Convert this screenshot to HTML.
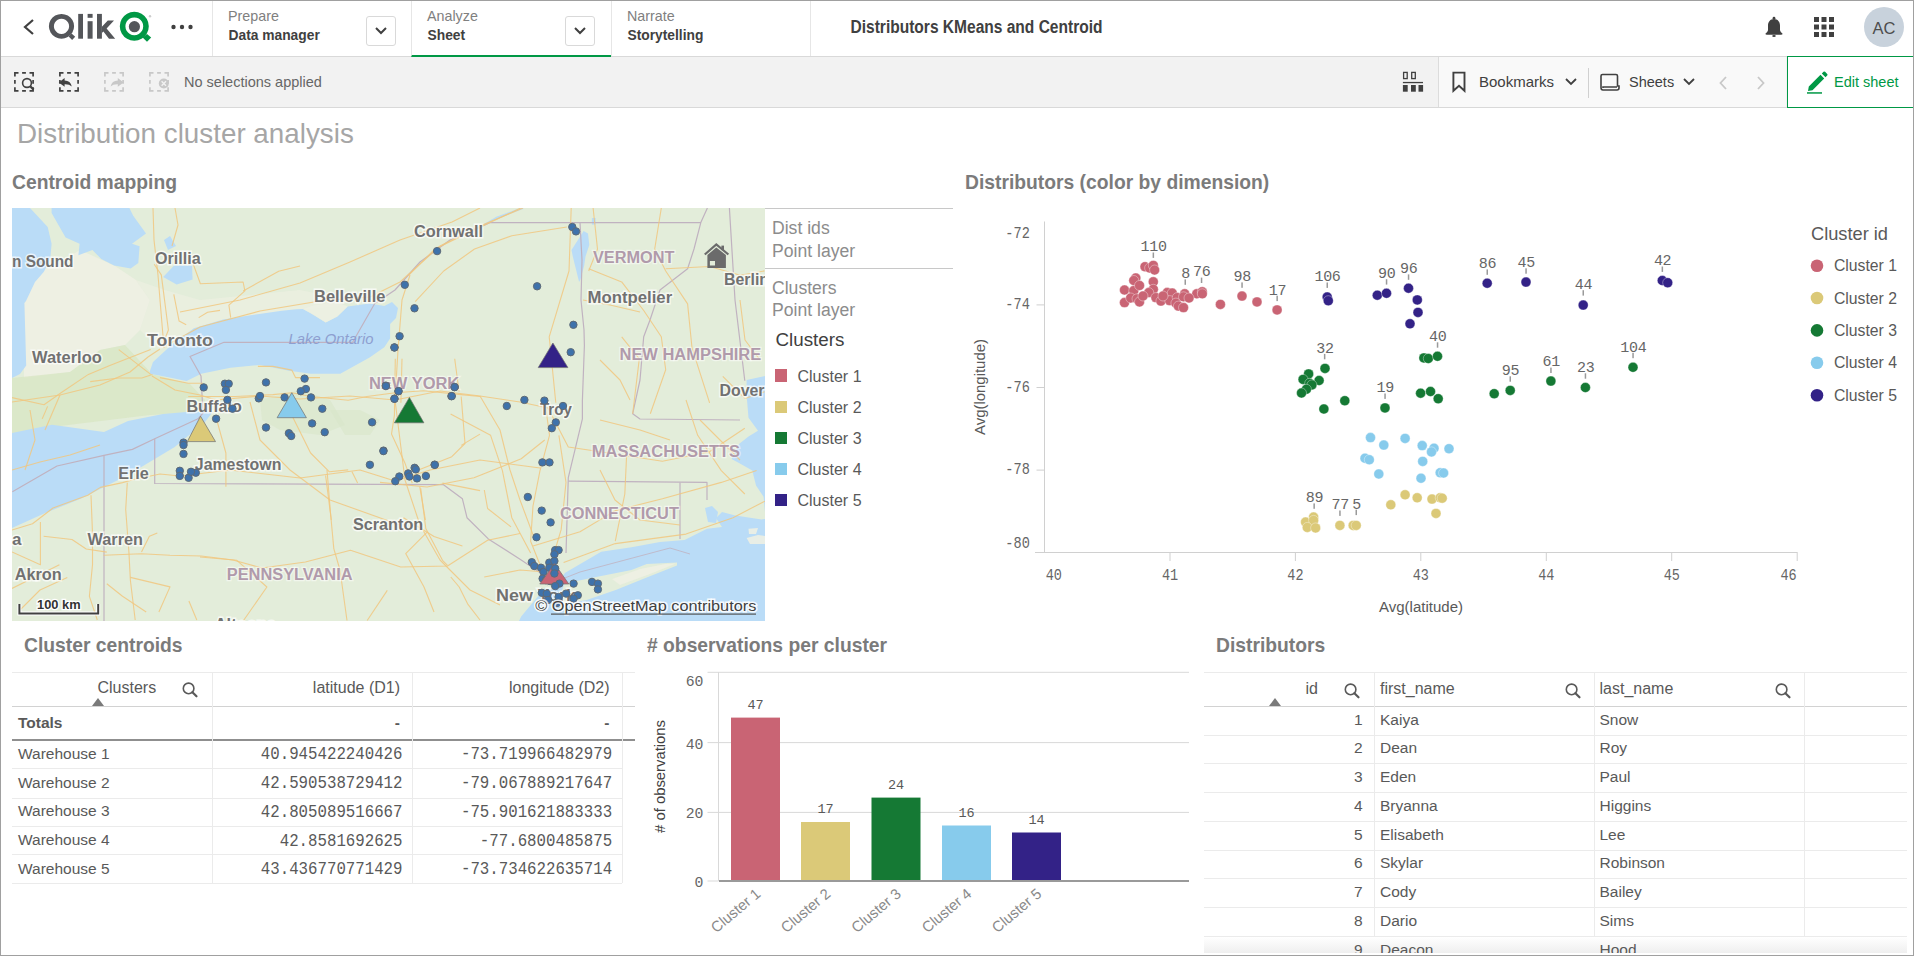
<!DOCTYPE html>
<html><head><meta charset="utf-8">
<style>
*{margin:0;padding:0;box-sizing:border-box}
html,body{width:1914px;height:956px;overflow:hidden;background:#fff;font-family:"Liberation Sans",sans-serif;color:#595959}
.a{position:absolute}
#frame{position:absolute;left:0;top:0;width:1914px;height:956px;border:1px solid #a0a0a0;pointer-events:none;z-index:50}
.hdr{position:absolute;left:0;top:0;width:1914px;height:57px;background:#fff;border-bottom:1px solid #d9d9d9}
.tab{position:absolute;top:0;height:56px;border-left:1px solid #e6e6e6}
.tab .l1{position:absolute;left:15px;top:7.5px;font-size:14.3px;color:#808080}
.tab .l2{position:absolute;left:15.5px;top:27.5px;font-size:13.8px;font-weight:bold;color:#404040}
.dd{position:absolute;top:16px;width:30px;height:30px;border:1px solid #d9d9d9;border-radius:3px}
.tbar{position:absolute;left:0;top:57px;width:1914px;height:51px;background:#f2f2f2;border-bottom:1px solid #d9d9d9}
.ttl{position:absolute;font-size:19.3px;font-weight:bold;color:#7b7b7b;white-space:nowrap;line-height:22px}
.mono{font-family:"Liberation Mono",monospace}
</style></head><body>
<div id="frame"></div>

<!-- HEADER -->
<div class="hdr">
  <svg class="a" style="left:0;top:0" width="212" height="56">
    <path d="M33 20 L25 27 L33 34" fill="none" stroke="#404040" stroke-width="2.2"/>
    <path fill-rule="evenodd" fill="#54565a" d="M61.5 13.9 A12.6 12.4 0 1 1 61.49 13.9Z M61.5 18.7 A7.6 7.6 0 1 0 61.51 18.7Z"/>
    <path fill="#54565a" d="M68.6 36.4 L72.1 40 L75.2 36.8 L71.6 33.5Z"/>
    <rect x="78.2" y="13.9" width="4.8" height="24.8" fill="#54565a"/>
    <rect x="87.6" y="13.9" width="5" height="3.9" fill="#54565a"/>
    <rect x="87.6" y="21.2" width="5" height="17.5" fill="#54565a"/>
    <rect x="97" y="13.9" width="4.9" height="24.8" fill="#54565a"/>
    <path fill="#54565a" d="M101.9 26.8 L107.8 20.6 L114 20.6 L106.6 28.4 L115.2 38.7 L109 38.7 L103.4 31.4 L101.9 33Z"/>
    <path fill-rule="evenodd" fill="#009845" d="M134.3 11.8 A14.5 14.5 0 1 1 134.29 11.8Z M134.3 17.4 A8.9 8.9 0 1 0 134.31 17.4Z"/>
    <circle cx="134.4" cy="26.7" r="5.6" fill="#54565a"/>
    <path fill="#009845" d="M142.6 37.6 L147 41.7 L151.2 37.5 L147 33.9Z"/>
    <circle cx="150" cy="16.2" r="1.2" fill="#ccc"/>
    <circle cx="173.5" cy="27" r="2.2" fill="#404040"/><circle cx="182" cy="27" r="2.2" fill="#404040"/><circle cx="190.5" cy="27" r="2.2" fill="#404040"/>
  </svg>
  <div class="tab" style="left:212px;width:199px"><div class="l1">Prepare</div><div class="l2">Data manager</div>
    <div class="dd" style="left:153px"><svg width="28" height="28"><path d="M9 11 L14 16 L19 11" fill="none" stroke="#404040" stroke-width="2"/></svg></div></div>
  <div class="tab" style="left:411px;width:200px;border-bottom:2px solid #009845;height:57px"><div class="l1">Analyze</div><div class="l2">Sheet</div>
    <div class="dd" style="left:153px"><svg width="28" height="28"><path d="M9 11 L14 16 L19 11" fill="none" stroke="#404040" stroke-width="2"/></svg></div></div>
  <div class="tab" style="left:611px;width:200px;border-right:1px solid #e6e6e6"><div class="l1">Narrate</div><div class="l2">Storytelling</div></div>
  <svg class="a" style="left:845px;top:10px" width="300" height="30"><text x="5.5" y="22.8" font-family="Liberation Sans" font-weight="bold" font-size="17.5" fill="#404040" textLength="252" lengthAdjust="spacingAndGlyphs">Distributors KMeans and Centroid</text></svg>
  <!-- bell -->
  <svg class="a" style="left:1762px;top:15px" width="24" height="24"><circle cx="12" cy="3.2" r="1.4" fill="#404040"/><path d="M12 4 C8.2 4 6 6.8 6 10.8 L6 15.2 Q5.6 17.2 3.6 18.4 Q3 19.8 5 19.8 L19 19.8 Q21 19.8 20.4 18.4 Q18.4 17.2 18 15.2 L18 10.8 C18 6.8 15.8 4 12 4Z" fill="#404040"/><ellipse cx="12" cy="20.9" rx="1.8" ry="1" fill="#404040"/></svg>
  <!-- grid -->
  <svg class="a" style="left:1813px;top:16px" width="22" height="22">
    <g fill="#404040"><rect x="1" y="1" width="5" height="5"/><rect x="8.5" y="1" width="5" height="5"/><rect x="16" y="1" width="5" height="5"/>
    <rect x="1" y="8.5" width="5" height="5"/><rect x="8.5" y="8.5" width="5" height="5"/><rect x="16" y="8.5" width="5" height="5"/>
    <rect x="1" y="16" width="5" height="5"/><rect x="8.5" y="16" width="5" height="5"/><rect x="16" y="16" width="5" height="5"/></g></svg>
  <div class="a" style="left:1864px;top:7px;width:40px;height:40px;border-radius:50%;background:#c8d2dc;color:#4d4d4d;font-size:16.5px;text-align:center;line-height:42px">AC</div>
</div>

<!-- TOOLBAR -->
<div class="tbar">
  <svg class="a" style="left:0;top:0" width="340" height="50">
<path d="M14.9 19.5 L14.9 15.9 L18.5 15.9 M29.5 15.9 L33.1 15.9 L33.1 19.5 M33.1 30.199999999999996 L33.1 33.8 L29.5 33.8 M18.5 33.8 L14.9 33.8 L14.9 30.199999999999996 M22.1 15.9 L25.9 15.9 M22.1 33.8 L25.9 33.8 M14.9 22.95 L14.9 26.749999999999996 M33.1 22.95 L33.1 26.749999999999996" fill="none" stroke="#404040" stroke-width="1.7"/><path d="M59.9 19.5 L59.9 15.9 L63.5 15.9 M74.5 15.9 L78.1 15.9 L78.1 19.5 M78.1 30.199999999999996 L78.1 33.8 L74.5 33.8 M63.5 33.8 L59.9 33.8 L59.9 30.199999999999996 M67.1 15.9 L70.9 15.9 M67.1 33.8 L70.9 33.8 M59.9 22.95 L59.9 26.749999999999996 M78.1 22.95 L78.1 26.749999999999996" fill="none" stroke="#404040" stroke-width="1.7"/><path d="M104.9 19.5 L104.9 15.9 L108.5 15.9 M119.5 15.9 L123.1 15.9 L123.1 19.5 M123.1 30.199999999999996 L123.1 33.8 L119.5 33.8 M108.5 33.8 L104.9 33.8 L104.9 30.199999999999996 M112.1 15.9 L115.9 15.9 M112.1 33.8 L115.9 33.8 M104.9 22.95 L104.9 26.749999999999996 M123.1 22.95 L123.1 26.749999999999996" fill="none" stroke="#c8c8c8" stroke-width="1.7"/><path d="M149.9 19.5 L149.9 15.9 L153.5 15.9 M164.5 15.9 L168.1 15.9 L168.1 19.5 M168.1 30.199999999999996 L168.1 33.8 L164.5 33.8 M153.5 33.8 L149.9 33.8 L149.9 30.199999999999996 M157.1 15.9 L160.9 15.9 M157.1 33.8 L160.9 33.8 M149.9 22.95 L149.9 26.749999999999996 M168.1 22.95 L168.1 26.749999999999996" fill="none" stroke="#c8c8c8" stroke-width="1.7"/>
    <circle cx="27" cy="26" r="4.4" fill="none" stroke="#404040" stroke-width="1.6"/><path d="M30.2 29.2 L33.6 32.6" stroke="#404040" stroke-width="2.2"/>
    <path d="M58.8 25.4 L64.6 21 L64.6 23.6 Q70.6 23.8 71.8 29.6 Q69.4 27 64.6 27.2 L64.6 29.8Z" fill="#404040"/>
    <path d="M123.6 25.4 L117.8 21 L117.8 23.6 Q111.8 23.8 110.6 29.6 Q113 27 117.8 27.2 L117.8 29.8Z" fill="#c8c8c8"/>
    <circle cx="163.8" cy="26.5" r="5" fill="#c8c8c8"/><path d="M161.6 24.3 L166 28.7 M166 24.3 L161.6 28.7" stroke="#f2f2f2" stroke-width="1.4"/>
    <text x="184" y="30" font-size="14.5" fill="#666" font-family="Liberation Sans">No selections applied</text>
  </svg>
  <div class="a" style="left:1438px;top:0;width:348px;height:50px;background:#f9f9f9;border-left:1px solid #dcdcdc"></div>
  <svg class="a" style="left:1400px;top:0" width="514" height="50">
    <g fill="#404040"><rect x="3.6" y="15.4" width="3.6" height="6.2" fill="none" stroke="#404040" stroke-width="1.3"/><rect x="11.7" y="15.4" width="3.6" height="6.2" fill="none" stroke="#404040" stroke-width="1.3"/><rect x="2.9" y="24.9" width="20.1" height="1.3"/><rect x="2.9" y="28" width="4.8" height="6.7"/><rect x="11" y="28" width="4.8" height="6.7"/><rect x="18.5" y="28" width="4.6" height="6.7"/></g>
    <path d="M53.4 15.6 L64.5 15.6 L64.5 33.8 L59 28.8 L53.4 33.8Z" fill="none" stroke="#404040" stroke-width="1.9"/>
    <text x="79" y="30" font-size="15" fill="#404040" font-family="Liberation Sans">Bookmarks</text>
    <path d="M166 22 L171 27 L176 22" fill="none" stroke="#404040" stroke-width="1.8"/>
    <rect x="188" y="11" width="1" height="30" fill="#d0d0d0"/>
    <path d="M201 30.5 L201 19 Q201 17.5 202.5 17.5 L216 17.5 Q217.5 17.5 217.5 19 L217.5 29 L219 29 L219 31 Q219 33 217 33 L203 33 Q201 33 201 30.5Z M203 31 L203 30 L217 30" fill="none" stroke="#404040" stroke-width="1.6"/>
    <text x="229" y="30" font-size="14.5" fill="#404040" font-family="Liberation Sans">Sheets</text>
    <path d="M284 22 L289 27 L294 22" fill="none" stroke="#404040" stroke-width="1.8"/>
    <path d="M326 20 L320.5 26 L326 32" fill="none" stroke="#c8c8c8" stroke-width="1.8"/>
    <path d="M358 20 L363.5 26 L358 32" fill="none" stroke="#c8c8c8" stroke-width="1.8"/>
  </svg>
  <div class="a" style="left:1787px;top:-1px;width:127px;height:52px;background:#fff;border:1px solid #009845;border-right:none"></div>
  <svg class="a" style="left:1800px;top:0" width="114" height="50">
    <path d="M8 34 L8.8 29.5 L20.5 17.8 L24.2 21.5 L12.5 33.2Z M21.8 16.5 L23.5 14.8 Q24.3 14 25.1 14.8 L27.2 16.9 Q28 17.7 27.2 18.5 L25.5 20.2Z" fill="#009845"/>
    <rect x="7" y="35.2" width="15" height="1.5" fill="#009845"/>
    <text x="34" y="30" font-size="14.5" fill="#009845" font-family="Liberation Sans">Edit sheet</text>
  </svg>
</div>


<div class="a" style="left:17px;top:118px;font-size:27.8px;line-height:32px;color:#a6a6a6;white-space:nowrap">Distribution cluster analysis</div>
<div class="ttl" style="left:12px;top:171.5px">Centroid mapping</div>
<div class="ttl" style="left:965px;top:171.5px">Distributors (color by dimension)</div>
<div class="ttl" style="left:24px;top:634.5px">Cluster centroids</div>
<div class="ttl" style="left:647px;top:634.5px"># observations per cluster</div>
<div class="ttl" style="left:1216px;top:634.5px">Distributors</div>


<svg class="a" style="left:12px;top:208px" width="753" height="413" viewBox="0 0 753 413">
<rect width="753" height="413" fill="#e3edda"/>
<polygon points="12.0,60.0 48.0,54.0 68.0,42.0 103.0,58.0 124.0,72.0 138.0,92.0 128.0,122.0 113.0,137.0 88.0,142.0 58.0,164.0 12.0,170.0" fill="#eef0e3" />
<polygon points="124.0,72.0 153.0,82.0 188.0,92.0 228.0,88.0 288.0,82.0 338.0,92.0 328.0,98.0 268.0,104.0 218.0,110.0 178.0,124.0 148.0,142.0 128.0,122.0 138.0,92.0" fill="#eef0e3" opacity="0.6"/>
<polygon points="0.0,170.0 58.0,164.0 88.0,142.0 113.0,137.0 140.0,166.0 178.0,176.0 193.0,192.0 193.0,204.0 138.0,207.0 48.0,218.0 0.0,226.0" fill="#d8e6c3" opacity="0.75"/>
<polygon points="248.0,192.0 288.0,182.0 318.0,192.0 333.0,217.0 308.0,227.0 268.0,222.0 250.0,212.0" fill="#d9e6c9" opacity="0.6"/>
<polygon points="318.0,202.0 348.0,202.0 368.0,212.0 358.0,227.0 333.0,227.0" fill="#d9e6c9" opacity="0.6"/>
<polygon points="0.0,0.0 18.0,0.0 35.7,19.0 39.6,35.7 38.3,51.0 31.9,63.8 23.0,74.0 14.0,93.0 12.4,95.0 14.2,157.6 8.0,166.0 0.0,170.0" fill="#badcf7" />
<polygon points="39.6,0.0 117.4,0.0 121.2,7.7 134.0,25.5 120.0,35.7 127.6,38.3 126.3,54.9 118.7,60.6 102.1,57.4 89.3,51.0 80.4,42.0 66.4,47.2 67.6,35.7 53.6,29.4 39.6,5.0" fill="#badcf7" />
<polygon points="151.2,68.9 162.1,57.4 180.0,57.4 180.6,71.5 164.6,76.6" fill="#badcf7" />
<polygon points="152.0,32.0 158.0,28.0 164.0,38.0 156.0,42.0" fill="#badcf7" />
<polygon points="138.0,162.8 141.0,154.0 160.0,136.4 181.9,120.3 211.2,111.5 240.5,107.1 269.8,102.7 284.4,101.3 291.0,101.0 300.0,106.0 313.7,114.5 325.4,108.6 335.7,98.4 357.6,95.4 372.3,98.0 380.0,94.0 386.0,100.0 384.0,110.0 378.1,115.9 378.1,130.6 372.3,139.3 357.6,149.6 328.3,165.7 299.0,165.7 277.1,162.8 247.8,156.9 218.5,159.8 189.2,165.7 174.6,173.0 152.6,168.6 138.0,165.7" fill="#badcf7" />
<polygon points="291.0,101.0 300.0,98.0 313.0,96.0 320.0,92.0 335.7,98.4 325.4,108.6 313.7,114.5 300.0,106.0" fill="#eef0e3" opacity="0.8"/>
<polyline points="458.0,25.0 484.0,10.0 511.0,0.0" fill="none" stroke="#badcf7" stroke-width="2" stroke-linejoin="round" />
<polygon points="0.0,225.0 40.0,216.7 92.0,224.0 116.0,213.0 151.0,206.0 174.0,204.0 201.0,203.5 193.0,214.0 162.7,239.0 115.6,267.3 68.6,290.8 33.3,305.0 0.0,320.0" fill="#badcf7" />
<polygon points="571.6,23.0 576.0,25.5 577.3,37.0 573.5,48.5 572.2,57.4 568.4,71.4 567.1,74.0 560.8,48.5 559.5,42.0 565.9,31.9" fill="#badcf7" />
<polygon points="579.9,10.0 583.7,10.0 583.7,16.6 579.9,16.6" fill="#badcf7" />
<polygon points="753.0,168.0 734.6,172.0 734.6,187.0 736.5,209.7 746.0,222.8 736.5,228.5 727.0,236.0 719.6,251.0 727.0,254.9 740.3,262.4 744.0,277.5 751.6,288.8 753.0,304.0 753.0,311.0 749.7,311.4 723.3,307.6 710.0,304.0 704.0,310.0 710.0,319.0 695.0,320.8 672.5,332.0 648.0,334.0 619.5,339.3 589.2,343.8 552.8,365.0 543.0,382.0 532.7,380.3 509.2,408.5 507.0,413.0 753.0,413.0" fill="#badcf7" />
<polygon points="693.0,300.0 700.0,298.0 706.0,304.0 704.0,315.0 696.0,314.0" fill="#badcf7" />
<polygon points="736.5,320.8 746.0,320.0 744.0,326.0 737.0,326.0" fill="#eef0e3" opacity="0.9"/>
<polygon points="734.6,330.0 746.0,327.0 753.0,328.0 753.0,336.0 738.0,336.0" fill="#eef0e3" opacity="0.9"/>
<polygon points="552.8,375.6 581.6,369.6 619.5,362.0 634.7,356.0 665.0,354.5 665.0,357.5 634.7,369.6 604.4,381.7 574.0,392.3 543.8,396.8" fill="#e3edda" />
<polygon points="600.0,371.0 628.0,361.0 653.0,356.0 664.0,355.5 638.0,366.0 608.0,377.0" fill="#eef0e3" opacity="0.9"/>
<polyline points="0.4,283.8 45.0,258.0 92.0,247.3 120.4,241.4 142.7,230.8 186.0,210.8 191.0,205.0 189.0,168.0 178.0,148.5 212.0,134.3 340.6,134.3 362.6,95.8 383.0,82.0 408.0,54.0 438.0,32.0 477.9,14.6 688.8,14.6 695.4,0.0" fill="none" stroke="#c0b2c0" stroke-width="1.2" stroke-linejoin="round" />
<polyline points="142.7,230.8 142.7,275.5 431.5,276.7 450.4,290.8 455.0,309.7 476.3,330.9 509.2,352.0 533.0,368.0" fill="none" stroke="#c0b2c0" stroke-width="1.2" stroke-linejoin="round" />
<polyline points="92.0,247.3 92.0,413.0" fill="none" stroke="#c0b2c0" stroke-width="1.2" stroke-linejoin="round" />
<polyline points="568.0,14.6 570.0,52.0 569.0,92.0 572.0,122.0 572.4,137.6 570.4,192.0 570.4,210.8 556.3,269.7 554.0,345.0" fill="none" stroke="#c0b2c0" stroke-width="1.2" stroke-linejoin="round" />
<polyline points="688.8,14.6 682.0,41.0 675.6,60.7 648.0,82.0 638.0,112.0 631.7,128.8 628.0,172.0 620.7,205.7 628.0,211.0 728.0,212.0" fill="none" stroke="#c0b2c0" stroke-width="1.2" stroke-linejoin="round" />
<polyline points="556.3,273.2 695.0,274.4 695.0,292.0" fill="none" stroke="#c0b2c0" stroke-width="1.2" stroke-linejoin="round" />
<polyline points="668.0,274.4 668.0,330.9" fill="none" stroke="#c0b2c0" stroke-width="1.2" stroke-linejoin="round" />
<polyline points="717.4,0.0 723.0,92.0 732.8,172.8" fill="none" stroke="#c0b2c0" stroke-width="1.2" stroke-linejoin="round" />
<polyline points="535.0,377.0 568.0,364.0 658.0,340.0 678.0,346.0" fill="none" stroke="#c0b2c0" stroke-width="0.8" stroke-linejoin="round" />
<polyline points="153.0,138.0 188.0,119.0 248.0,103.0 308.0,93.0 358.0,89.0 388.0,74.0 428.0,38.0 468.0,18.0 511.0,0.0" fill="none" stroke="#f1c77f" stroke-width="1.1" stroke-linejoin="round" opacity="0.85"/>
<polyline points="168.0,104.0 228.0,92.0 288.0,75.0 338.0,54.0 388.0,32.0 440.0,14.0 468.0,0.0" fill="none" stroke="#f1c77f" stroke-width="1.1" stroke-linejoin="round" opacity="0.85"/>
<polyline points="152.0,140.0 148.0,92.0 146.0,67.0 142.0,32.0 141.0,0.0" fill="none" stroke="#f1c77f" stroke-width="1.1" stroke-linejoin="round" opacity="0.85"/>
<polyline points="163.0,0.0 166.0,17.0 160.0,38.0" fill="none" stroke="#f1c77f" stroke-width="1.1" stroke-linejoin="round" opacity="0.85"/>
<polyline points="148.0,141.0 136.0,149.0 118.0,164.0 88.0,177.0 48.0,187.0 0.0,194.0" fill="none" stroke="#f1c77f" stroke-width="1.1" stroke-linejoin="round" opacity="0.85"/>
<polyline points="48.0,187.0 33.0,222.0" fill="none" stroke="#f1c77f" stroke-width="1.1" stroke-linejoin="round" opacity="0.85"/>
<polyline points="140.0,168.0 163.0,182.0 188.0,187.0 204.0,192.0" fill="none" stroke="#f1c77f" stroke-width="1.1" stroke-linejoin="round" opacity="0.85"/>
<polyline points="204.0,192.0 248.0,188.0 288.0,191.0 338.0,188.0 383.0,192.0 428.0,183.0 468.0,188.0 508.0,194.0 536.0,200.0" fill="none" stroke="#f1c77f" stroke-width="1.1" stroke-linejoin="round" opacity="0.85"/>
<polyline points="383.0,192.0 386.0,142.0 390.0,92.0 398.0,67.0" fill="none" stroke="#f1c77f" stroke-width="1.1" stroke-linejoin="round" opacity="0.85"/>
<polyline points="168.0,268.0 218.0,262.0 288.0,270.0 348.0,262.0 383.0,273.0 418.0,262.0 468.0,252.0 528.0,260.0" fill="none" stroke="#f1c77f" stroke-width="1.1" stroke-linejoin="round" opacity="0.85"/>
<polyline points="383.0,192.0 388.0,232.0 393.0,272.0 408.0,317.0 428.0,352.0 458.0,382.0 488.0,397.0" fill="none" stroke="#f1c77f" stroke-width="1.1" stroke-linejoin="round" opacity="0.85"/>
<polyline points="238.0,194.0 248.0,232.0 278.0,262.0 318.0,292.0 388.0,317.0" fill="none" stroke="#f1c77f" stroke-width="1.1" stroke-linejoin="round" opacity="0.85"/>
<polyline points="468.0,188.0 488.0,222.0 498.0,262.0 508.0,292.0 523.0,332.0" fill="none" stroke="#f1c77f" stroke-width="1.1" stroke-linejoin="round" opacity="0.85"/>
<polyline points="0.0,322.0 20.5,315.7 41.0,300.0 75.8,287.3 88.4,279.4 110.5,274.6 121.6,271.5 148.0,266.0 168.0,268.0" fill="none" stroke="#f1c77f" stroke-width="1.1" stroke-linejoin="round" opacity="0.85"/>
<polyline points="31.6,328.3 60.0,331.5 74.2,341.0 94.8,344.1" fill="none" stroke="#f1c77f" stroke-width="1.1" stroke-linejoin="round" opacity="0.85"/>
<polyline points="91.6,347.3 129.5,345.7 158.0,347.3 189.5,348.0 221.0,352.0 250.0,360.0 293.4,354.0 338.5,342.3 388.7,359.0 435.5,358.0 475.6,332.2 508.0,325.5" fill="none" stroke="#f1c77f" stroke-width="1.1" stroke-linejoin="round" opacity="0.85"/>
<polyline points="115.3,274.6 113.7,301.5 116.9,344.0 118.4,372.5 123.2,412.0" fill="none" stroke="#f1c77f" stroke-width="1.1" stroke-linejoin="round" opacity="0.85"/>
<polyline points="79.0,287.3 80.5,325.0 80.5,356.8 77.4,388.3 85.3,412.0" fill="none" stroke="#f1c77f" stroke-width="1.1" stroke-linejoin="round" opacity="0.85"/>
<polyline points="94.8,375.7 110.5,388.3 134.2,404.0" fill="none" stroke="#f1c77f" stroke-width="1.1" stroke-linejoin="round" opacity="0.85"/>
<polyline points="118.4,369.4 158.0,378.9 146.9,404.0" fill="none" stroke="#f1c77f" stroke-width="1.1" stroke-linejoin="round" opacity="0.85"/>
<polyline points="129.5,344.0 137.4,328.3 145.3,325.0" fill="none" stroke="#f1c77f" stroke-width="1.1" stroke-linejoin="round" opacity="0.85"/>
<polyline points="28.4,314.0 28.4,356.8 0.0,344.0" fill="none" stroke="#f1c77f" stroke-width="1.1" stroke-linejoin="round" opacity="0.85"/>
<polyline points="47.4,356.8 0.0,380.4" fill="none" stroke="#f1c77f" stroke-width="1.1" stroke-linejoin="round" opacity="0.85"/>
<polyline points="55.3,369.4 28.0,382.0 8.0,402.0" fill="none" stroke="#f1c77f" stroke-width="1.1" stroke-linejoin="round" opacity="0.85"/>
<polyline points="176.9,393.0 184.8,412.0" fill="none" stroke="#f1c77f" stroke-width="1.1" stroke-linejoin="round" opacity="0.85"/>
<polyline points="315.0,262.0 318.4,303.8 321.8,340.6 328.0,362.0 335.0,412.5" fill="none" stroke="#f1c77f" stroke-width="1.1" stroke-linejoin="round" opacity="0.85"/>
<polyline points="188.0,349.0 224.8,352.3 254.9,379.0 231.5,412.5" fill="none" stroke="#f1c77f" stroke-width="1.1" stroke-linejoin="round" opacity="0.85"/>
<polyline points="408.7,280.4 413.8,320.5 430.5,352.3 435.5,357.3" fill="none" stroke="#f1c77f" stroke-width="1.1" stroke-linejoin="round" opacity="0.85"/>
<polyline points="415.4,323.9 393.7,345.6 412.0,379.0 422.0,404.0" fill="none" stroke="#f1c77f" stroke-width="1.1" stroke-linejoin="round" opacity="0.85"/>
<polyline points="375.3,382.4 355.2,412.5" fill="none" stroke="#f1c77f" stroke-width="1.1" stroke-linejoin="round" opacity="0.85"/>
<polyline points="472.3,282.0 475.6,300.5 499.0,318.9" fill="none" stroke="#f1c77f" stroke-width="1.1" stroke-linejoin="round" opacity="0.85"/>
<polyline points="438.8,369.0 447.2,379.0 455.6,395.8 468.0,412.0" fill="none" stroke="#f1c77f" stroke-width="1.1" stroke-linejoin="round" opacity="0.85"/>
<polyline points="472.3,369.0 508.0,362.0 533.0,364.0" fill="none" stroke="#f1c77f" stroke-width="1.1" stroke-linejoin="round" opacity="0.85"/>
<polyline points="532.7,192.0 537.5,227.3 528.0,262.6 521.0,298.0 518.6,333.2 528.0,356.7" fill="none" stroke="#f1c77f" stroke-width="1.1" stroke-linejoin="round" opacity="0.85"/>
<polyline points="546.9,227.3 554.0,274.4 549.2,321.4 542.2,345.0" fill="none" stroke="#f1c77f" stroke-width="1.1" stroke-linejoin="round" opacity="0.85"/>
<polyline points="536.0,200.0 556.3,239.0 603.3,246.0 650.4,253.2 697.5,243.8 732.8,220.2" fill="none" stroke="#f1c77f" stroke-width="1.1" stroke-linejoin="round" opacity="0.85"/>
<polyline points="521.0,338.0 568.0,323.8 603.3,302.6 650.4,290.8 709.3,274.4 744.6,262.6" fill="none" stroke="#f1c77f" stroke-width="1.1" stroke-linejoin="round" opacity="0.85"/>
<polyline points="615.0,239.0 612.8,286.0 603.3,333.2" fill="none" stroke="#f1c77f" stroke-width="1.1" stroke-linejoin="round" opacity="0.85"/>
<polyline points="551.6,354.4 603.3,335.6 674.0,326.1 721.0,309.7 752.8,293.2" fill="none" stroke="#f1c77f" stroke-width="1.1" stroke-linejoin="round" opacity="0.85"/>
<polyline points="674.0,192.0 685.7,227.3 709.3,262.6 732.8,286.0" fill="none" stroke="#f1c77f" stroke-width="1.1" stroke-linejoin="round" opacity="0.85"/>
<polyline points="438.6,206.0 478.6,227.3 490.4,262.6 499.8,309.7 518.6,345.0" fill="none" stroke="#f1c77f" stroke-width="1.1" stroke-linejoin="round" opacity="0.85"/>
<polyline points="368.0,274.4 415.0,279.0 462.0,269.7 509.2,250.8 532.7,232.0" fill="none" stroke="#f1c77f" stroke-width="1.1" stroke-linejoin="round" opacity="0.85"/>
<polyline points="391.5,309.7 422.0,328.5 450.4,338.0" fill="none" stroke="#f1c77f" stroke-width="1.1" stroke-linejoin="round" opacity="0.85"/>
<polyline points="396.6,67.3 422.9,41.0 477.9,14.6 508.6,0.0" fill="none" stroke="#f1c77f" stroke-width="1.1" stroke-linejoin="round" opacity="0.85"/>
<polyline points="403.2,93.7 431.7,63.0 462.5,41.0 499.8,27.8 554.8,19.0" fill="none" stroke="#f1c77f" stroke-width="1.1" stroke-linejoin="round" opacity="0.85"/>
<polyline points="390.0,150.8 388.9,194.8" fill="none" stroke="#f1c77f" stroke-width="1.1" stroke-linejoin="round" opacity="0.85"/>
<polyline points="442.7,150.8 447.1,183.8" fill="none" stroke="#f1c77f" stroke-width="1.1" stroke-linejoin="round" opacity="0.85"/>
<polyline points="559.2,0.0 557.0,63.0 537.2,128.8 543.8,194.8" fill="none" stroke="#f1c77f" stroke-width="1.1" stroke-linejoin="round" opacity="0.85"/>
<polyline points="581.1,0.0 585.5,41.0 576.7,63.0" fill="none" stroke="#f1c77f" stroke-width="1.1" stroke-linejoin="round" opacity="0.85"/>
<polyline points="576.7,60.7 609.7,73.9 631.7,102.5 649.3,128.8 653.7,161.8 638.3,205.7" fill="none" stroke="#f1c77f" stroke-width="1.1" stroke-linejoin="round" opacity="0.85"/>
<polyline points="649.3,0.0 642.7,41.0 653.7,63.0 675.6,95.9 680.0,139.8 697.6,194.8" fill="none" stroke="#f1c77f" stroke-width="1.1" stroke-linejoin="round" opacity="0.85"/>
<polyline points="653.7,60.7 697.6,58.5 728.4,67.3 752.5,62.9" fill="none" stroke="#f1c77f" stroke-width="1.1" stroke-linejoin="round" opacity="0.85"/>
<polyline points="609.7,128.8 627.3,150.8 620.7,205.7" fill="none" stroke="#f1c77f" stroke-width="1.1" stroke-linejoin="round" opacity="0.85"/>
<polyline points="710.8,168.4 732.8,190.4 752.5,183.8" fill="none" stroke="#f1c77f" stroke-width="1.1" stroke-linejoin="round" opacity="0.85"/>
<polyline points="571.0,92.0 598.0,97.0 628.0,104.0" fill="none" stroke="#f1c77f" stroke-width="1.1" stroke-linejoin="round" opacity="0.85"/>
<polyline points="588.0,152.0 608.0,172.0 618.0,192.0" fill="none" stroke="#f1c77f" stroke-width="1.1" stroke-linejoin="round" opacity="0.85"/>
<polyline points="688.0,212.0 708.0,232.0 728.0,252.0" fill="none" stroke="#f1c77f" stroke-width="1.1" stroke-linejoin="round" opacity="0.85"/>
<polyline points="728.0,92.0 733.0,132.0 748.0,152.0" fill="none" stroke="#f1c77f" stroke-width="1.1" stroke-linejoin="round" opacity="0.85"/>
<polyline points="142.2,56.2 149.3,66.9 156.4,122.0 152.9,130.9" fill="none" stroke="#f1c77f" stroke-width="1.1" stroke-linejoin="round" opacity="0.85"/>
<polyline points="161.8,86.4 167.1,113.1 174.2,116.7" fill="none" stroke="#f1c77f" stroke-width="1.1" stroke-linejoin="round" opacity="0.85"/>
<polyline points="181.3,56.2 188.4,75.8 231.1,74.0 232.9,82.9 216.9,97.1 218.7,109.6" fill="none" stroke="#f1c77f" stroke-width="1.1" stroke-linejoin="round" opacity="0.85"/>
<polyline points="186.7,109.6 195.6,104.2 208.0,102.4" fill="none" stroke="#f1c77f" stroke-width="1.1" stroke-linejoin="round" opacity="0.85"/>
<polyline points="231.1,82.9 266.7,63.3 288.0,58.0" fill="none" stroke="#f1c77f" stroke-width="1.1" stroke-linejoin="round" opacity="0.85"/>
<polyline points="138.7,141.6 115.6,150.4 97.8,157.6 76.4,166.4 49.8,184.2 32.0,196.7 0.0,189.6" fill="none" stroke="#f1c77f" stroke-width="1.1" stroke-linejoin="round" opacity="0.85"/>
<polyline points="106.7,141.6 138.7,166.4" fill="none" stroke="#f1c77f" stroke-width="1.1" stroke-linejoin="round" opacity="0.85"/>
<polyline points="35.6,198.4 30.2,210.9" fill="none" stroke="#f1c77f" stroke-width="1.1" stroke-linejoin="round" opacity="0.85"/>
<polyline points="78.2,173.6 106.7,170.0 129.8,170.0 140.4,166.4" fill="none" stroke="#f1c77f" stroke-width="1.1" stroke-linejoin="round" opacity="0.85"/>
<polyline points="148.0,169.6 176.2,175.3 191.3,175.3" fill="none" stroke="#f1c77f" stroke-width="1.1" stroke-linejoin="round" opacity="0.85"/>
<polyline points="176.2,188.5 223.3,188.5 261.0,186.6 279.8,184.7 298.6,188.5 336.2,192.2 355.0,188.5 383.3,184.7 411.5,182.8 449.2,186.6 468.0,188.5" fill="none" stroke="#f1c77f" stroke-width="1.1" stroke-linejoin="round" opacity="0.85"/>
<polyline points="245.9,158.4 261.0,158.4 279.8,162.1 283.5,169.6 308.0,169.6" fill="none" stroke="#f1c77f" stroke-width="1.1" stroke-linejoin="round" opacity="0.85"/>
<polyline points="279.8,207.3 298.6,245.0 317.4,263.8 336.2,261.9" fill="none" stroke="#f1c77f" stroke-width="1.1" stroke-linejoin="round" opacity="0.85"/>
<polyline points="204.5,211.0 213.9,245.0 213.9,278.8" fill="none" stroke="#f1c77f" stroke-width="1.1" stroke-linejoin="round" opacity="0.85"/>
<polyline points="383.3,150.8 382.4,207.3 379.5,226.1 392.7,254.4 400.2,275.1" fill="none" stroke="#f1c77f" stroke-width="1.1" stroke-linejoin="round" opacity="0.85"/>
<polyline points="340.0,263.8 345.6,275.1" fill="none" stroke="#f1c77f" stroke-width="1.1" stroke-linejoin="round" opacity="0.85"/>
<polyline points="449.2,188.5 453.0,235.5 439.8,248.7 402.1,263.8" fill="none" stroke="#f1c77f" stroke-width="1.1" stroke-linejoin="round" opacity="0.85"/>
<polyline points="468.0,226.1 449.2,237.4" fill="none" stroke="#f1c77f" stroke-width="1.1" stroke-linejoin="round" opacity="0.85"/>
<polyline points="313.6,267.5 319.3,312.0" fill="none" stroke="#f1c77f" stroke-width="1.1" stroke-linejoin="round" opacity="0.85"/>
<polyline points="407.8,278.8 413.4,312.0" fill="none" stroke="#f1c77f" stroke-width="1.1" stroke-linejoin="round" opacity="0.85"/>
<polyline points="430.4,275.1 468.0,282.6" fill="none" stroke="#f1c77f" stroke-width="1.1" stroke-linejoin="round" opacity="0.85"/>
<polyline points="0.0,262.0 28.0,254.0 58.0,247.0 88.0,237.0" fill="none" stroke="#f1c77f" stroke-width="1.1" stroke-linejoin="round" opacity="0.85"/>
<polyline points="18.0,202.0 23.0,232.0 13.0,262.0" fill="none" stroke="#f1c77f" stroke-width="1.1" stroke-linejoin="round" opacity="0.85"/>
<polyline points="588.0,212.0 628.0,222.0 658.0,232.0" fill="none" stroke="#f1c77f" stroke-width="1.1" stroke-linejoin="round" opacity="0.85"/>
<polyline points="588.0,262.0 603.0,292.0 628.0,312.0 668.0,317.0" fill="none" stroke="#f1c77f" stroke-width="1.1" stroke-linejoin="round" opacity="0.85"/>
<text x="0.0" y="59.0" font-family="Liberation Sans" font-weight="bold" font-size="17" fill="#717171" stroke="#ffffff" stroke-width="3" stroke-opacity="0.7" paint-order="stroke" textLength="61.5" lengthAdjust="spacingAndGlyphs">n Sound</text>
<text x="143.0" y="55.7" font-family="Liberation Sans" font-weight="bold" font-size="17" fill="#717171" stroke="#ffffff" stroke-width="3" stroke-opacity="0.7" paint-order="stroke" textLength="45.6" lengthAdjust="spacingAndGlyphs">Orillia</text>
<text x="135.0" y="138.0" font-family="Liberation Sans" font-weight="bold" font-size="17" fill="#717171" stroke="#ffffff" stroke-width="3" stroke-opacity="0.7" paint-order="stroke" textLength="65.8" lengthAdjust="spacingAndGlyphs">Toronto</text>
<text x="20.0" y="154.5" font-family="Liberation Sans" font-weight="bold" font-size="17" fill="#717171" stroke="#ffffff" stroke-width="3" stroke-opacity="0.7" paint-order="stroke" textLength="69.8" lengthAdjust="spacingAndGlyphs">Waterloo</text>
<text x="302.0" y="94.0" font-family="Liberation Sans" font-weight="bold" font-size="17" fill="#717171" stroke="#ffffff" stroke-width="3" stroke-opacity="0.7" paint-order="stroke" textLength="71.4" lengthAdjust="spacingAndGlyphs">Belleville</text>
<text x="402.0" y="29.0" font-family="Liberation Sans" font-weight="bold" font-size="17" fill="#717171" stroke="#ffffff" stroke-width="3" stroke-opacity="0.7" paint-order="stroke" textLength="69.0" lengthAdjust="spacingAndGlyphs">Cornwall</text>
<text x="174.4" y="203.9" font-family="Liberation Sans" font-weight="bold" font-size="17" fill="#717171" stroke="#ffffff" stroke-width="3" stroke-opacity="0.7" paint-order="stroke" textLength="55.5" lengthAdjust="spacingAndGlyphs">Buffalo</text>
<text x="182.8" y="262.2" font-family="Liberation Sans" font-weight="bold" font-size="17" fill="#717171" stroke="#ffffff" stroke-width="3" stroke-opacity="0.7" paint-order="stroke" textLength="86.6" lengthAdjust="spacingAndGlyphs">Jamestown</text>
<text x="106.2" y="270.5" font-family="Liberation Sans" font-weight="bold" font-size="17" fill="#717171" stroke="#ffffff" stroke-width="3" stroke-opacity="0.7" paint-order="stroke" textLength="30.6" lengthAdjust="spacingAndGlyphs">Erie</text>
<text x="75.6" y="336.8" font-family="Liberation Sans" font-weight="bold" font-size="17" fill="#717171" stroke="#ffffff" stroke-width="3" stroke-opacity="0.7" paint-order="stroke" textLength="55.4" lengthAdjust="spacingAndGlyphs">Warren</text>
<text x="2.7" y="372.1" font-family="Liberation Sans" font-weight="bold" font-size="17" fill="#717171" stroke="#ffffff" stroke-width="3" stroke-opacity="0.7" paint-order="stroke" textLength="47.1" lengthAdjust="spacingAndGlyphs">Akron</text>
<text x="0.0" y="336.8" font-family="Liberation Sans" font-weight="bold" font-size="17" fill="#717171" stroke="#ffffff" stroke-width="3" stroke-opacity="0.7" paint-order="stroke">a</text>
<text x="202.7" y="422.0" font-family="Liberation Sans" font-weight="bold" font-size="17" fill="#717171" stroke="#ffffff" stroke-width="3" stroke-opacity="0.7" paint-order="stroke" textLength="61.2" lengthAdjust="spacingAndGlyphs">Altoona</text>
<text x="341.0" y="321.5" font-family="Liberation Sans" font-weight="bold" font-size="17" fill="#717171" stroke="#ffffff" stroke-width="3" stroke-opacity="0.7" paint-order="stroke" textLength="70.2" lengthAdjust="spacingAndGlyphs">Scranton</text>
<text x="528.0" y="207.4" font-family="Liberation Sans" font-weight="bold" font-size="17" fill="#717171" stroke="#ffffff" stroke-width="3" stroke-opacity="0.7" paint-order="stroke" textLength="31.8" lengthAdjust="spacingAndGlyphs">Troy</text>
<text x="484.0" y="393.3" font-family="Liberation Sans" font-weight="bold" font-size="17" fill="#717171" stroke="#ffffff" stroke-width="3" stroke-opacity="0.7" paint-order="stroke" textLength="80.0" lengthAdjust="spacingAndGlyphs">New York</text>
<text x="575.6" y="95.3" font-family="Liberation Sans" font-weight="bold" font-size="17" fill="#717171" stroke="#ffffff" stroke-width="3" stroke-opacity="0.7" paint-order="stroke" textLength="84.6" lengthAdjust="spacingAndGlyphs">Montpelier</text>
<text x="712.0" y="76.6" font-family="Liberation Sans" font-weight="bold" font-size="17" fill="#717171" stroke="#ffffff" stroke-width="3" stroke-opacity="0.7" paint-order="stroke" textLength="45.0" lengthAdjust="spacingAndGlyphs">Berlin</text>
<text x="707.5" y="187.6" font-family="Liberation Sans" font-weight="bold" font-size="17" fill="#717171" stroke="#ffffff" stroke-width="3" stroke-opacity="0.7" paint-order="stroke" textLength="45.0" lengthAdjust="spacingAndGlyphs">Dover</text>
<text x="214.8" y="371.7" font-family="Liberation Sans" font-weight="bold" font-size="16" fill="#b09aab" stroke="#ffffff" stroke-width="2.5" stroke-opacity="0.5" paint-order="stroke" textLength="125.7" lengthAdjust="spacingAndGlyphs">PENNSYLVANIA</text>
<text x="356.9" y="181.3" font-family="Liberation Sans" font-weight="bold" font-size="16" fill="#b09aab" stroke="#ffffff" stroke-width="2.5" stroke-opacity="0.5" paint-order="stroke" textLength="90.4" lengthAdjust="spacingAndGlyphs">NEW YORK</text>
<text x="581.0" y="54.6" font-family="Liberation Sans" font-weight="bold" font-size="16" fill="#b09aab" stroke="#ffffff" stroke-width="2.5" stroke-opacity="0.5" paint-order="stroke" textLength="81.4" lengthAdjust="spacingAndGlyphs">VERMONT</text>
<text x="607.5" y="152.4" font-family="Liberation Sans" font-weight="bold" font-size="16" fill="#b09aab" stroke="#ffffff" stroke-width="2.5" stroke-opacity="0.5" paint-order="stroke" textLength="141.7" lengthAdjust="spacingAndGlyphs">NEW HAMPSHIRE</text>
<text x="579.8" y="248.6" font-family="Liberation Sans" font-weight="bold" font-size="16" fill="#b09aab" stroke="#ffffff" stroke-width="2.5" stroke-opacity="0.5" paint-order="stroke" textLength="148.2" lengthAdjust="spacingAndGlyphs">MASSACHUSETTS</text>
<text x="548.0" y="311.0" font-family="Liberation Sans" font-weight="bold" font-size="16" fill="#b09aab" stroke="#ffffff" stroke-width="2.5" stroke-opacity="0.5" paint-order="stroke" textLength="118.9" lengthAdjust="spacingAndGlyphs">CONNECTICUT</text>
<text x="276.5" y="136.0" font-family="Liberation Sans" font-style="italic" font-size="15" fill="#8e9fd0" textLength="85" lengthAdjust="spacingAndGlyphs">Lake Ontario</text>
<circle cx="560.3" cy="19.0" r="3.7" fill="#3e72ab" stroke="#5e6a76" stroke-width="1"/>
<circle cx="564.0" cy="23.4" r="3.7" fill="#3e72ab" stroke="#5e6a76" stroke-width="1"/>
<circle cx="425.1" cy="43.1" r="3.7" fill="#3e72ab" stroke="#5e6a76" stroke-width="1"/>
<circle cx="392.8" cy="76.8" r="3.7" fill="#3e72ab" stroke="#5e6a76" stroke-width="1"/>
<circle cx="402.5" cy="100.3" r="3.7" fill="#3e72ab" stroke="#5e6a76" stroke-width="1"/>
<circle cx="525.1" cy="78.3" r="3.7" fill="#3e72ab" stroke="#5e6a76" stroke-width="1"/>
<circle cx="387.6" cy="128.2" r="3.7" fill="#3e72ab" stroke="#5e6a76" stroke-width="1"/>
<circle cx="382.5" cy="139.4" r="3.7" fill="#3e72ab" stroke="#5e6a76" stroke-width="1"/>
<circle cx="561.4" cy="116.8" r="3.7" fill="#3e72ab" stroke="#5e6a76" stroke-width="1"/>
<circle cx="558.7" cy="144.2" r="3.7" fill="#3e72ab" stroke="#5e6a76" stroke-width="1"/>
<circle cx="373.9" cy="177.6" r="3.7" fill="#3e72ab" stroke="#5e6a76" stroke-width="1"/>
<circle cx="386.5" cy="183.1" r="3.7" fill="#3e72ab" stroke="#5e6a76" stroke-width="1"/>
<circle cx="382.5" cy="190.8" r="3.7" fill="#3e72ab" stroke="#5e6a76" stroke-width="1"/>
<circle cx="442.7" cy="179.0" r="3.7" fill="#3e72ab" stroke="#5e6a76" stroke-width="1"/>
<circle cx="439.4" cy="188.2" r="3.7" fill="#3e72ab" stroke="#5e6a76" stroke-width="1"/>
<circle cx="494.8" cy="198.0" r="3.7" fill="#3e72ab" stroke="#5e6a76" stroke-width="1"/>
<circle cx="512.4" cy="191.9" r="3.7" fill="#3e72ab" stroke="#5e6a76" stroke-width="1"/>
<circle cx="532.4" cy="192.6" r="3.7" fill="#3e72ab" stroke="#5e6a76" stroke-width="1"/>
<circle cx="551.0" cy="198.0" r="3.7" fill="#3e72ab" stroke="#5e6a76" stroke-width="1"/>
<circle cx="543.8" cy="214.4" r="3.7" fill="#3e72ab" stroke="#5e6a76" stroke-width="1"/>
<circle cx="539.8" cy="220.2" r="3.7" fill="#3e72ab" stroke="#5e6a76" stroke-width="1"/>
<circle cx="371.5" cy="242.6" r="3.7" fill="#3e72ab" stroke="#5e6a76" stroke-width="1"/>
<circle cx="422.6" cy="256.7" r="3.7" fill="#3e72ab" stroke="#5e6a76" stroke-width="1"/>
<circle cx="402.6" cy="259.8" r="3.7" fill="#3e72ab" stroke="#5e6a76" stroke-width="1"/>
<circle cx="403.8" cy="261.4" r="3.7" fill="#3e72ab" stroke="#5e6a76" stroke-width="1"/>
<circle cx="396.2" cy="265.4" r="3.7" fill="#3e72ab" stroke="#5e6a76" stroke-width="1"/>
<circle cx="387.3" cy="268.5" r="3.7" fill="#3e72ab" stroke="#5e6a76" stroke-width="1"/>
<circle cx="383.3" cy="273.2" r="3.7" fill="#3e72ab" stroke="#5e6a76" stroke-width="1"/>
<circle cx="405.0" cy="270.4" r="3.7" fill="#3e72ab" stroke="#5e6a76" stroke-width="1"/>
<circle cx="413.9" cy="268.0" r="3.7" fill="#3e72ab" stroke="#5e6a76" stroke-width="1"/>
<circle cx="397.4" cy="268.5" r="3.7" fill="#3e72ab" stroke="#5e6a76" stroke-width="1"/>
<circle cx="530.4" cy="254.4" r="3.7" fill="#3e72ab" stroke="#5e6a76" stroke-width="1"/>
<circle cx="537.5" cy="254.4" r="3.7" fill="#3e72ab" stroke="#5e6a76" stroke-width="1"/>
<circle cx="515.8" cy="289.0" r="3.7" fill="#3e72ab" stroke="#5e6a76" stroke-width="1"/>
<circle cx="529.7" cy="302.6" r="3.7" fill="#3e72ab" stroke="#5e6a76" stroke-width="1"/>
<circle cx="538.6" cy="314.4" r="3.7" fill="#3e72ab" stroke="#5e6a76" stroke-width="1"/>
<circle cx="524.5" cy="329.2" r="3.7" fill="#3e72ab" stroke="#5e6a76" stroke-width="1"/>
<circle cx="191.7" cy="179.4" r="3.7" fill="#3e72ab" stroke="#5e6a76" stroke-width="1"/>
<circle cx="212.9" cy="175.7" r="3.7" fill="#3e72ab" stroke="#5e6a76" stroke-width="1"/>
<circle cx="216.7" cy="175.7" r="3.7" fill="#3e72ab" stroke="#5e6a76" stroke-width="1"/>
<circle cx="213.9" cy="181.9" r="3.7" fill="#3e72ab" stroke="#5e6a76" stroke-width="1"/>
<circle cx="215.4" cy="191.9" r="3.7" fill="#3e72ab" stroke="#5e6a76" stroke-width="1"/>
<circle cx="220.5" cy="200.7" r="3.7" fill="#3e72ab" stroke="#5e6a76" stroke-width="1"/>
<circle cx="204.1" cy="210.7" r="3.7" fill="#3e72ab" stroke="#5e6a76" stroke-width="1"/>
<circle cx="171.5" cy="234.6" r="3.7" fill="#3e72ab" stroke="#5e6a76" stroke-width="1"/>
<circle cx="171.5" cy="237.0" r="3.7" fill="#3e72ab" stroke="#5e6a76" stroke-width="1"/>
<circle cx="171.5" cy="245.9" r="3.7" fill="#3e72ab" stroke="#5e6a76" stroke-width="1"/>
<circle cx="167.8" cy="262.8" r="3.7" fill="#3e72ab" stroke="#5e6a76" stroke-width="1"/>
<circle cx="167.8" cy="267.9" r="3.7" fill="#3e72ab" stroke="#5e6a76" stroke-width="1"/>
<circle cx="176.6" cy="269.8" r="3.7" fill="#3e72ab" stroke="#5e6a76" stroke-width="1"/>
<circle cx="183.8" cy="264.7" r="3.7" fill="#3e72ab" stroke="#5e6a76" stroke-width="1"/>
<circle cx="179.0" cy="263.8" r="3.7" fill="#3e72ab" stroke="#5e6a76" stroke-width="1"/>
<circle cx="254.0" cy="174.4" r="3.7" fill="#3e72ab" stroke="#5e6a76" stroke-width="1"/>
<circle cx="246.8" cy="190.4" r="3.7" fill="#3e72ab" stroke="#5e6a76" stroke-width="1"/>
<circle cx="248.0" cy="188.0" r="3.7" fill="#3e72ab" stroke="#5e6a76" stroke-width="1"/>
<circle cx="254.0" cy="219.5" r="3.7" fill="#3e72ab" stroke="#5e6a76" stroke-width="1"/>
<circle cx="272.6" cy="189.4" r="3.7" fill="#3e72ab" stroke="#5e6a76" stroke-width="1"/>
<circle cx="292.6" cy="170.6" r="3.7" fill="#3e72ab" stroke="#5e6a76" stroke-width="1"/>
<circle cx="293.9" cy="181.0" r="3.7" fill="#3e72ab" stroke="#5e6a76" stroke-width="1"/>
<circle cx="288.8" cy="183.2" r="3.7" fill="#3e72ab" stroke="#5e6a76" stroke-width="1"/>
<circle cx="299.0" cy="189.4" r="3.7" fill="#3e72ab" stroke="#5e6a76" stroke-width="1"/>
<circle cx="310.3" cy="200.7" r="3.7" fill="#3e72ab" stroke="#5e6a76" stroke-width="1"/>
<circle cx="300.1" cy="215.4" r="3.7" fill="#3e72ab" stroke="#5e6a76" stroke-width="1"/>
<circle cx="312.7" cy="224.2" r="3.7" fill="#3e72ab" stroke="#5e6a76" stroke-width="1"/>
<circle cx="276.9" cy="225.2" r="3.7" fill="#3e72ab" stroke="#5e6a76" stroke-width="1"/>
<circle cx="279.2" cy="228.0" r="3.7" fill="#3e72ab" stroke="#5e6a76" stroke-width="1"/>
<circle cx="360.1" cy="214.3" r="3.7" fill="#3e72ab" stroke="#5e6a76" stroke-width="1"/>
<circle cx="382.4" cy="139.5" r="3.7" fill="#3e72ab" stroke="#5e6a76" stroke-width="1"/>
<circle cx="373.9" cy="178.1" r="3.7" fill="#3e72ab" stroke="#5e6a76" stroke-width="1"/>
<circle cx="386.5" cy="183.2" r="3.7" fill="#3e72ab" stroke="#5e6a76" stroke-width="1"/>
<circle cx="382.4" cy="190.7" r="3.7" fill="#3e72ab" stroke="#5e6a76" stroke-width="1"/>
<circle cx="442.6" cy="179.1" r="3.7" fill="#3e72ab" stroke="#5e6a76" stroke-width="1"/>
<circle cx="439.8" cy="188.1" r="3.7" fill="#3e72ab" stroke="#5e6a76" stroke-width="1"/>
<circle cx="371.4" cy="243.1" r="3.7" fill="#3e72ab" stroke="#5e6a76" stroke-width="1"/>
<circle cx="357.9" cy="256.8" r="3.7" fill="#3e72ab" stroke="#5e6a76" stroke-width="1"/>
<circle cx="422.8" cy="256.8" r="3.7" fill="#3e72ab" stroke="#5e6a76" stroke-width="1"/>
<circle cx="543.2" cy="342.1" r="3.7" fill="#3e72ab" stroke="#5e6a76" stroke-width="1"/>
<circle cx="546.6" cy="342.1" r="3.7" fill="#3e72ab" stroke="#5e6a76" stroke-width="1"/>
<circle cx="542.4" cy="346.3" r="3.7" fill="#3e72ab" stroke="#5e6a76" stroke-width="1"/>
<circle cx="519.8" cy="354.2" r="3.7" fill="#3e72ab" stroke="#5e6a76" stroke-width="1"/>
<circle cx="522.3" cy="358.0" r="3.7" fill="#3e72ab" stroke="#5e6a76" stroke-width="1"/>
<circle cx="529.0" cy="359.7" r="3.7" fill="#3e72ab" stroke="#5e6a76" stroke-width="1"/>
<circle cx="531.5" cy="363.9" r="3.7" fill="#3e72ab" stroke="#5e6a76" stroke-width="1"/>
<circle cx="530.6" cy="370.6" r="3.7" fill="#3e72ab" stroke="#5e6a76" stroke-width="1"/>
<circle cx="534.0" cy="372.2" r="3.7" fill="#3e72ab" stroke="#5e6a76" stroke-width="1"/>
<circle cx="538.2" cy="373.1" r="3.7" fill="#3e72ab" stroke="#5e6a76" stroke-width="1"/>
<circle cx="537.3" cy="354.6" r="3.7" fill="#3e72ab" stroke="#5e6a76" stroke-width="1"/>
<circle cx="542.4" cy="353.0" r="3.7" fill="#3e72ab" stroke="#5e6a76" stroke-width="1"/>
<circle cx="537.3" cy="359.7" r="3.7" fill="#3e72ab" stroke="#5e6a76" stroke-width="1"/>
<circle cx="580.0" cy="373.9" r="3.7" fill="#3e72ab" stroke="#5e6a76" stroke-width="1"/>
<circle cx="585.9" cy="375.6" r="3.7" fill="#3e72ab" stroke="#5e6a76" stroke-width="1"/>
<circle cx="585.9" cy="381.4" r="3.7" fill="#3e72ab" stroke="#5e6a76" stroke-width="1"/>
<circle cx="529.8" cy="384.8" r="3.7" fill="#3e72ab" stroke="#5e6a76" stroke-width="1"/>
<circle cx="534.8" cy="385.6" r="3.7" fill="#3e72ab" stroke="#5e6a76" stroke-width="1"/>
<circle cx="546.6" cy="389.0" r="3.7" fill="#3e72ab" stroke="#5e6a76" stroke-width="1"/>
<circle cx="554.1" cy="385.6" r="3.7" fill="#3e72ab" stroke="#5e6a76" stroke-width="1"/>
<circle cx="565.8" cy="387.3" r="3.7" fill="#3e72ab" stroke="#5e6a76" stroke-width="1"/>
<circle cx="561.6" cy="390.6" r="3.7" fill="#3e72ab" stroke="#5e6a76" stroke-width="1"/>
<circle cx="536.0" cy="392.0" r="3.7" fill="#3e72ab" stroke="#5e6a76" stroke-width="1"/>
<circle cx="544.9" cy="395.0" r="3.7" fill="#3e72ab" stroke="#5e6a76" stroke-width="1"/>
<polygon points="188.5,208.2 175.3,233.6 203.5,233.6" fill="#dbc978" stroke="#6f6f6f" stroke-width="1" stroke-opacity="0.7"/>
<polygon points="279.8,184.7 265.1,209.7 294.4,209.7" fill="#87cbec" stroke="#6f6f6f" stroke-width="1" stroke-opacity="0.7"/>
<polygon points="397.4,189.4 382.4,214.8 411.9,214.8" fill="#157934" stroke="#6f6f6f" stroke-width="1" stroke-opacity="0.7"/>
<polygon points="540.9,135.0 526.2,159.6 555.9,159.6" fill="#332287" stroke="#6f6f6f" stroke-width="1" stroke-opacity="0.7"/>
<polygon points="542.5,355.5 527.8,376.0 556.8,376.0" fill="#c96474" stroke="#6f6f6f" stroke-width="1" stroke-opacity="0.7"/>
<circle cx="543.2" cy="360.5" r="3.7" fill="#3e72ab" stroke="#5e6a76" stroke-width="1"/>
<circle cx="542.4" cy="365.5" r="3.7" fill="#3e72ab" stroke="#5e6a76" stroke-width="1"/>
<circle cx="547.4" cy="375.6" r="3.7" fill="#3e72ab" stroke="#5e6a76" stroke-width="1"/>
<circle cx="543.2" cy="378.1" r="3.7" fill="#3e72ab" stroke="#5e6a76" stroke-width="1"/>
<circle cx="561.6" cy="375.6" r="3.7" fill="#3e72ab" stroke="#5e6a76" stroke-width="1"/>
<g transform="translate(-12,-208)" fill="#6b6b6b"><path d="M704.8 254.5 L716.3 244.4 L728.4 254.5" fill="none" stroke="#6b6b6b" stroke-width="2.2"/><rect x="721.4" y="245.6" width="2.6" height="4.5"/><path d="M707.4 255 L716.3 247.5 L725.9 255 L725.9 268 L707.4 268Z M709.9 261 L709.9 265.4 L715 265.4 L715 261Z" fill-rule="evenodd"/></g>
<g transform="translate(-12,-208)"><path d="M19.4 604 L19.4 613.5 L98.2 613.5 L98.2 604" fill="none" stroke="#ffffff" stroke-width="4"/><path d="M19.4 604 L19.4 613.5 L98.2 613.5 L98.2 604" fill="none" stroke="#404040" stroke-width="2"/><text x="37" y="609" font-family="Liberation Sans" font-weight="bold" font-size="12" fill="#333" stroke="#fff" stroke-width="2.5" paint-order="stroke" textLength="43.6" lengthAdjust="spacingAndGlyphs">100 km</text></g>
<g transform="translate(-12,-208)"><text x="535.3" y="611" font-family="Liberation Sans" font-size="15" fill="#404040" stroke="#fff" stroke-width="3" stroke-opacity="0.85" paint-order="stroke" textLength="221" lengthAdjust="spacingAndGlyphs">© OpenStreetMap contributors</text><rect x="551" y="613.5" width="205" height="1.2" fill="#555"/></g>
</svg>
<div class="a" style="left:765px;top:208px;width:188px;height:1px;background:#c8c8c8"></div>
<div class="a" style="left:765px;top:268px;width:188px;height:1px;background:#c8c8c8"></div>
<div style="position:absolute;font-size:17.6px;color:#8c8c8c;white-space:nowrap;line-height:20px;left:772px;top:217.8px">Dist ids</div>
<div style="position:absolute;font-size:17.6px;color:#8c8c8c;white-space:nowrap;line-height:20px;left:772px;top:240.8px">Point layer</div>
<div style="position:absolute;font-size:17.6px;color:#8c8c8c;white-space:nowrap;line-height:20px;left:772px;top:277.6px">Clusters</div>
<div style="position:absolute;font-size:17.6px;color:#8c8c8c;white-space:nowrap;line-height:20px;left:772px;top:300.4px">Point layer</div>
<div class="a" style="left:775.5px;top:330px;font-size:18.8px;color:#404040;line-height:20px">Clusters</div>
<div class="a" style="left:775px;top:369.4px;width:12.4px;height:12.4px;background:#c96474"></div>
<div class="a" style="left:797.5px;top:366.6px;font-size:16px;color:#595959;line-height:20px;white-space:nowrap">Cluster 1</div>
<div class="a" style="left:775px;top:400.5px;width:12.4px;height:12.4px;background:#dbc978"></div>
<div class="a" style="left:797.5px;top:397.7px;font-size:16px;color:#595959;line-height:20px;white-space:nowrap">Cluster 2</div>
<div class="a" style="left:775px;top:431.9px;width:12.4px;height:12.4px;background:#157934"></div>
<div class="a" style="left:797.5px;top:429.1px;font-size:16px;color:#595959;line-height:20px;white-space:nowrap">Cluster 3</div>
<div class="a" style="left:775px;top:463.0px;width:12.4px;height:12.4px;background:#87cbec"></div>
<div class="a" style="left:797.5px;top:460.2px;font-size:16px;color:#595959;line-height:20px;white-space:nowrap">Cluster 4</div>
<div class="a" style="left:775px;top:493.8px;width:12.4px;height:12.4px;background:#332287"></div>
<div class="a" style="left:797.5px;top:491.0px;font-size:16px;color:#595959;line-height:20px;white-space:nowrap">Cluster 5</div>
<svg class="a" style="left:960px;top:200px" width="954" height="430" viewBox="960 200 954 430">
<rect x="1044" y="221.5" width="1" height="331" fill="#d0d0d0"/>
<rect x="1035" y="552" width="762" height="1" fill="#d0d0d0"/>
<rect x="1036.5" y="304.4" width="8" height="1" fill="#d0d0d0"/>
<rect x="1036.5" y="387.0" width="8" height="1" fill="#d0d0d0"/>
<rect x="1036.5" y="469.6" width="8" height="1" fill="#d0d0d0"/>
<rect x="1169.5" y="552" width="1" height="9" fill="#d0d0d0"/>
<rect x="1294.9" y="552" width="1" height="9" fill="#d0d0d0"/>
<rect x="1420.3" y="552" width="1" height="9" fill="#d0d0d0"/>
<rect x="1545.8" y="552" width="1" height="9" fill="#d0d0d0"/>
<rect x="1671.2" y="552" width="1" height="9" fill="#d0d0d0"/>
<rect x="1796.7" y="552" width="1" height="9" fill="#d0d0d0"/>
<g transform="translate(1029.8,237.6) scale(0.8,1)"><text x="0" y="0" text-anchor="end" font-family="Liberation Mono" font-size="17" fill="#666">-72</text></g>
<g transform="translate(1029.8,308.8) scale(0.8,1)"><text x="0" y="0" text-anchor="end" font-family="Liberation Mono" font-size="17" fill="#666">-74</text></g>
<g transform="translate(1029.8,391.6) scale(0.8,1)"><text x="0" y="0" text-anchor="end" font-family="Liberation Mono" font-size="17" fill="#666">-76</text></g>
<g transform="translate(1029.8,474.2) scale(0.8,1)"><text x="0" y="0" text-anchor="end" font-family="Liberation Mono" font-size="17" fill="#666">-78</text></g>
<g transform="translate(1029.8,547.5) scale(0.8,1)"><text x="0" y="0" text-anchor="end" font-family="Liberation Mono" font-size="17" fill="#666">-80</text></g>
<g transform="translate(1053.8,580.2) scale(0.82,1)"><text x="0" y="0" text-anchor="middle" font-family="Liberation Mono" font-size="16.5" fill="#666">40</text></g>
<g transform="translate(1170.0,580.2) scale(0.82,1)"><text x="0" y="0" text-anchor="middle" font-family="Liberation Mono" font-size="16.5" fill="#666">41</text></g>
<g transform="translate(1295.4,580.2) scale(0.82,1)"><text x="0" y="0" text-anchor="middle" font-family="Liberation Mono" font-size="16.5" fill="#666">42</text></g>
<g transform="translate(1420.8,580.2) scale(0.82,1)"><text x="0" y="0" text-anchor="middle" font-family="Liberation Mono" font-size="16.5" fill="#666">43</text></g>
<g transform="translate(1546.3,580.2) scale(0.82,1)"><text x="0" y="0" text-anchor="middle" font-family="Liberation Mono" font-size="16.5" fill="#666">44</text></g>
<g transform="translate(1671.8,580.2) scale(0.82,1)"><text x="0" y="0" text-anchor="middle" font-family="Liberation Mono" font-size="16.5" fill="#666">45</text></g>
<g transform="translate(1788.5,580.2) scale(0.82,1)"><text x="0" y="0" text-anchor="middle" font-family="Liberation Mono" font-size="16.5" fill="#666">46</text></g>
<text x="1421" y="612" text-anchor="middle" font-family="Liberation Sans" font-size="14" fill="#595959" textLength="84" lengthAdjust="spacingAndGlyphs">Avg(latitude)</text>
<text transform="translate(984.5,387) rotate(-90)" text-anchor="middle" font-family="Liberation Sans" font-size="14" fill="#595959" textLength="96" lengthAdjust="spacingAndGlyphs">Avg(longitude)</text>
<circle cx="1124.5" cy="290" r="5" fill="#c96474" stroke="#ffffff" stroke-opacity="0.45" stroke-width="0.8"/>
<circle cx="1124.5" cy="302.6" r="5" fill="#c96474" stroke="#ffffff" stroke-opacity="0.45" stroke-width="0.8"/>
<circle cx="1133.8" cy="290.6" r="5" fill="#c96474" stroke="#ffffff" stroke-opacity="0.45" stroke-width="0.8"/>
<circle cx="1135.8" cy="278" r="5" fill="#c96474" stroke="#ffffff" stroke-opacity="0.45" stroke-width="0.8"/>
<circle cx="1133.8" cy="280.5" r="5" fill="#c96474" stroke="#ffffff" stroke-opacity="0.45" stroke-width="0.8"/>
<circle cx="1139.5" cy="285.5" r="5" fill="#c96474" stroke="#ffffff" stroke-opacity="0.45" stroke-width="0.8"/>
<circle cx="1130.7" cy="298" r="5" fill="#c96474" stroke="#ffffff" stroke-opacity="0.45" stroke-width="0.8"/>
<circle cx="1137" cy="298.8" r="5" fill="#c96474" stroke="#ffffff" stroke-opacity="0.45" stroke-width="0.8"/>
<circle cx="1139.5" cy="301.9" r="5" fill="#c96474" stroke="#ffffff" stroke-opacity="0.45" stroke-width="0.8"/>
<circle cx="1145" cy="266.7" r="5" fill="#c96474" stroke="#ffffff" stroke-opacity="0.45" stroke-width="0.8"/>
<circle cx="1149.6" cy="268" r="5" fill="#c96474" stroke="#ffffff" stroke-opacity="0.45" stroke-width="0.8"/>
<circle cx="1153.3" cy="265.4" r="5" fill="#c96474" stroke="#ffffff" stroke-opacity="0.45" stroke-width="0.8"/>
<circle cx="1154.6" cy="270" r="5" fill="#c96474" stroke="#ffffff" stroke-opacity="0.45" stroke-width="0.8"/>
<circle cx="1153.3" cy="281.8" r="5" fill="#c96474" stroke="#ffffff" stroke-opacity="0.45" stroke-width="0.8"/>
<circle cx="1153.3" cy="289.3" r="5" fill="#c96474" stroke="#ffffff" stroke-opacity="0.45" stroke-width="0.8"/>
<circle cx="1148.8" cy="292.6" r="5" fill="#c96474" stroke="#ffffff" stroke-opacity="0.45" stroke-width="0.8"/>
<circle cx="1155.9" cy="297.6" r="5" fill="#c96474" stroke="#ffffff" stroke-opacity="0.45" stroke-width="0.8"/>
<circle cx="1160.9" cy="301.1" r="5" fill="#c96474" stroke="#ffffff" stroke-opacity="0.45" stroke-width="0.8"/>
<circle cx="1167.2" cy="292.6" r="5" fill="#c96474" stroke="#ffffff" stroke-opacity="0.45" stroke-width="0.8"/>
<circle cx="1172.2" cy="293.1" r="5" fill="#c96474" stroke="#ffffff" stroke-opacity="0.45" stroke-width="0.8"/>
<circle cx="1169.7" cy="300.6" r="5" fill="#c96474" stroke="#ffffff" stroke-opacity="0.45" stroke-width="0.8"/>
<circle cx="1177.2" cy="297.6" r="5" fill="#c96474" stroke="#ffffff" stroke-opacity="0.45" stroke-width="0.8"/>
<circle cx="1175.9" cy="303.1" r="5" fill="#c96474" stroke="#ffffff" stroke-opacity="0.45" stroke-width="0.8"/>
<circle cx="1178.4" cy="306.1" r="5" fill="#c96474" stroke="#ffffff" stroke-opacity="0.45" stroke-width="0.8"/>
<circle cx="1183.5" cy="307.6" r="5" fill="#c96474" stroke="#ffffff" stroke-opacity="0.45" stroke-width="0.8"/>
<circle cx="1184.7" cy="293.8" r="5" fill="#c96474" stroke="#ffffff" stroke-opacity="0.45" stroke-width="0.8"/>
<circle cx="1183.5" cy="296.8" r="5" fill="#c96474" stroke="#ffffff" stroke-opacity="0.45" stroke-width="0.8"/>
<circle cx="1196.8" cy="293.8" r="5" fill="#c96474" stroke="#ffffff" stroke-opacity="0.45" stroke-width="0.8"/>
<circle cx="1202.3" cy="291.8" r="5" fill="#c96474" stroke="#ffffff" stroke-opacity="0.45" stroke-width="0.8"/>
<circle cx="1202.3" cy="293.8" r="5" fill="#c96474" stroke="#ffffff" stroke-opacity="0.45" stroke-width="0.8"/>
<circle cx="1220.4" cy="304.4" r="5" fill="#c96474" stroke="#ffffff" stroke-opacity="0.45" stroke-width="0.8"/>
<circle cx="1242" cy="296.1" r="5" fill="#c96474" stroke="#ffffff" stroke-opacity="0.45" stroke-width="0.8"/>
<circle cx="1257" cy="301.9" r="5" fill="#c96474" stroke="#ffffff" stroke-opacity="0.45" stroke-width="0.8"/>
<circle cx="1277.1" cy="309.9" r="5" fill="#c96474" stroke="#ffffff" stroke-opacity="0.45" stroke-width="0.8"/>
<circle cx="1143" cy="296" r="5" fill="#c96474" stroke="#ffffff" stroke-opacity="0.45" stroke-width="0.8"/>
<circle cx="1163" cy="296" r="5" fill="#c96474" stroke="#ffffff" stroke-opacity="0.45" stroke-width="0.8"/>
<circle cx="1189" cy="298" r="5" fill="#c96474" stroke="#ffffff" stroke-opacity="0.45" stroke-width="0.8"/>
<circle cx="1305.6" cy="522.1" r="5" fill="#dbc978" stroke="#ffffff" stroke-opacity="0.45" stroke-width="0.8"/>
<circle cx="1313.6" cy="517.1" r="5" fill="#dbc978" stroke="#ffffff" stroke-opacity="0.45" stroke-width="0.8"/>
<circle cx="1313.6" cy="520.4" r="5" fill="#dbc978" stroke="#ffffff" stroke-opacity="0.45" stroke-width="0.8"/>
<circle cx="1307.3" cy="527.4" r="5" fill="#dbc978" stroke="#ffffff" stroke-opacity="0.45" stroke-width="0.8"/>
<circle cx="1315.6" cy="527.9" r="5" fill="#dbc978" stroke="#ffffff" stroke-opacity="0.45" stroke-width="0.8"/>
<circle cx="1339.9" cy="525.4" r="5" fill="#dbc978" stroke="#ffffff" stroke-opacity="0.45" stroke-width="0.8"/>
<circle cx="1353.2" cy="525.4" r="5" fill="#dbc978" stroke="#ffffff" stroke-opacity="0.45" stroke-width="0.8"/>
<circle cx="1356.2" cy="525.4" r="5" fill="#dbc978" stroke="#ffffff" stroke-opacity="0.45" stroke-width="0.8"/>
<circle cx="1390.8" cy="504.8" r="5" fill="#dbc978" stroke="#ffffff" stroke-opacity="0.45" stroke-width="0.8"/>
<circle cx="1405.1" cy="494.8" r="5" fill="#dbc978" stroke="#ffffff" stroke-opacity="0.45" stroke-width="0.8"/>
<circle cx="1417.2" cy="497.8" r="5" fill="#dbc978" stroke="#ffffff" stroke-opacity="0.45" stroke-width="0.8"/>
<circle cx="1432" cy="499.1" r="5" fill="#dbc978" stroke="#ffffff" stroke-opacity="0.45" stroke-width="0.8"/>
<circle cx="1436" cy="513.4" r="5" fill="#dbc978" stroke="#ffffff" stroke-opacity="0.45" stroke-width="0.8"/>
<circle cx="1440.2" cy="497.8" r="5" fill="#dbc978" stroke="#ffffff" stroke-opacity="0.45" stroke-width="0.8"/>
<circle cx="1442.2" cy="498.2" r="5" fill="#dbc978" stroke="#ffffff" stroke-opacity="0.45" stroke-width="0.8"/>
<circle cx="1325" cy="368.4" r="5" fill="#157934" stroke="#ffffff" stroke-opacity="0.45" stroke-width="0.8"/>
<circle cx="1308.6" cy="373.9" r="5" fill="#157934" stroke="#ffffff" stroke-opacity="0.45" stroke-width="0.8"/>
<circle cx="1303.1" cy="379.4" r="5" fill="#157934" stroke="#ffffff" stroke-opacity="0.45" stroke-width="0.8"/>
<circle cx="1319.1" cy="380.5" r="5" fill="#157934" stroke="#ffffff" stroke-opacity="0.45" stroke-width="0.8"/>
<circle cx="1309.7" cy="383.3" r="5" fill="#157934" stroke="#ffffff" stroke-opacity="0.45" stroke-width="0.8"/>
<circle cx="1311.9" cy="384.9" r="5" fill="#157934" stroke="#ffffff" stroke-opacity="0.45" stroke-width="0.8"/>
<circle cx="1306.4" cy="389.3" r="5" fill="#157934" stroke="#ffffff" stroke-opacity="0.45" stroke-width="0.8"/>
<circle cx="1301.5" cy="393" r="5" fill="#157934" stroke="#ffffff" stroke-opacity="0.45" stroke-width="0.8"/>
<circle cx="1344.8" cy="400.7" r="5" fill="#157934" stroke="#ffffff" stroke-opacity="0.45" stroke-width="0.8"/>
<circle cx="1323.9" cy="409" r="5" fill="#157934" stroke="#ffffff" stroke-opacity="0.45" stroke-width="0.8"/>
<circle cx="1385" cy="407.9" r="5" fill="#157934" stroke="#ffffff" stroke-opacity="0.45" stroke-width="0.8"/>
<circle cx="1423.9" cy="357.9" r="5" fill="#157934" stroke="#ffffff" stroke-opacity="0.45" stroke-width="0.8"/>
<circle cx="1428.3" cy="358.5" r="5" fill="#157934" stroke="#ffffff" stroke-opacity="0.45" stroke-width="0.8"/>
<circle cx="1437.5" cy="356.3" r="5" fill="#157934" stroke="#ffffff" stroke-opacity="0.45" stroke-width="0.8"/>
<circle cx="1420.6" cy="393.2" r="5" fill="#157934" stroke="#ffffff" stroke-opacity="0.45" stroke-width="0.8"/>
<circle cx="1430.5" cy="391.5" r="5" fill="#157934" stroke="#ffffff" stroke-opacity="0.45" stroke-width="0.8"/>
<circle cx="1438.2" cy="398.7" r="5" fill="#157934" stroke="#ffffff" stroke-opacity="0.45" stroke-width="0.8"/>
<circle cx="1494.2" cy="393.7" r="5" fill="#157934" stroke="#ffffff" stroke-opacity="0.45" stroke-width="0.8"/>
<circle cx="1510.2" cy="390.4" r="5" fill="#157934" stroke="#ffffff" stroke-opacity="0.45" stroke-width="0.8"/>
<circle cx="1550.9" cy="381.1" r="5" fill="#157934" stroke="#ffffff" stroke-opacity="0.45" stroke-width="0.8"/>
<circle cx="1585.4" cy="387.5" r="5" fill="#157934" stroke="#ffffff" stroke-opacity="0.45" stroke-width="0.8"/>
<circle cx="1633" cy="367.3" r="5" fill="#157934" stroke="#ffffff" stroke-opacity="0.45" stroke-width="0.8"/>
<circle cx="1370.5" cy="437.6" r="5" fill="#87cbec" stroke="#ffffff" stroke-opacity="0.45" stroke-width="0.8"/>
<circle cx="1383.8" cy="445.1" r="5" fill="#87cbec" stroke="#ffffff" stroke-opacity="0.45" stroke-width="0.8"/>
<circle cx="1405.1" cy="438.4" r="5" fill="#87cbec" stroke="#ffffff" stroke-opacity="0.45" stroke-width="0.8"/>
<circle cx="1422.2" cy="445.6" r="5" fill="#87cbec" stroke="#ffffff" stroke-opacity="0.45" stroke-width="0.8"/>
<circle cx="1434" cy="448.2" r="5" fill="#87cbec" stroke="#ffffff" stroke-opacity="0.45" stroke-width="0.8"/>
<circle cx="1431.5" cy="451.9" r="5" fill="#87cbec" stroke="#ffffff" stroke-opacity="0.45" stroke-width="0.8"/>
<circle cx="1365" cy="458.2" r="5" fill="#87cbec" stroke="#ffffff" stroke-opacity="0.45" stroke-width="0.8"/>
<circle cx="1369.3" cy="459.7" r="5" fill="#87cbec" stroke="#ffffff" stroke-opacity="0.45" stroke-width="0.8"/>
<circle cx="1422.7" cy="461.4" r="5" fill="#87cbec" stroke="#ffffff" stroke-opacity="0.45" stroke-width="0.8"/>
<circle cx="1378.8" cy="474" r="5" fill="#87cbec" stroke="#ffffff" stroke-opacity="0.45" stroke-width="0.8"/>
<circle cx="1421" cy="478.2" r="5" fill="#87cbec" stroke="#ffffff" stroke-opacity="0.45" stroke-width="0.8"/>
<circle cx="1440.2" cy="472.7" r="5" fill="#87cbec" stroke="#ffffff" stroke-opacity="0.45" stroke-width="0.8"/>
<circle cx="1449" cy="448.7" r="5" fill="#87cbec" stroke="#ffffff" stroke-opacity="0.45" stroke-width="0.8"/>
<circle cx="1443.6" cy="473" r="5" fill="#87cbec" stroke="#ffffff" stroke-opacity="0.45" stroke-width="0.8"/>
<circle cx="1327.2" cy="297" r="5" fill="#332287" stroke="#ffffff" stroke-opacity="0.45" stroke-width="0.8"/>
<circle cx="1328.3" cy="300.7" r="5" fill="#332287" stroke="#ffffff" stroke-opacity="0.45" stroke-width="0.8"/>
<circle cx="1377.3" cy="295.2" r="5" fill="#332287" stroke="#ffffff" stroke-opacity="0.45" stroke-width="0.8"/>
<circle cx="1386.5" cy="293.3" r="5" fill="#332287" stroke="#ffffff" stroke-opacity="0.45" stroke-width="0.8"/>
<circle cx="1408.5" cy="288.2" r="5" fill="#332287" stroke="#ffffff" stroke-opacity="0.45" stroke-width="0.8"/>
<circle cx="1417.3" cy="299.9" r="5" fill="#332287" stroke="#ffffff" stroke-opacity="0.45" stroke-width="0.8"/>
<circle cx="1418" cy="312.4" r="5" fill="#332287" stroke="#ffffff" stroke-opacity="0.45" stroke-width="0.8"/>
<circle cx="1410" cy="323.8" r="5" fill="#332287" stroke="#ffffff" stroke-opacity="0.45" stroke-width="0.8"/>
<circle cx="1487.2" cy="283.2" r="5" fill="#332287" stroke="#ffffff" stroke-opacity="0.45" stroke-width="0.8"/>
<circle cx="1526" cy="282.1" r="5" fill="#332287" stroke="#ffffff" stroke-opacity="0.45" stroke-width="0.8"/>
<circle cx="1583.2" cy="305.1" r="5" fill="#332287" stroke="#ffffff" stroke-opacity="0.45" stroke-width="0.8"/>
<circle cx="1662.3" cy="280.5" r="5" fill="#332287" stroke="#ffffff" stroke-opacity="0.45" stroke-width="0.8"/>
<circle cx="1667.7" cy="282.7" r="5" fill="#332287" stroke="#ffffff" stroke-opacity="0.45" stroke-width="0.8"/>
<text x="1153.6" y="251.29999999999998" text-anchor="middle" font-family="Liberation Mono" font-size="15" letter-spacing="-0.3" fill="#666">110</text>
<rect x="1152.6" y="252.5" width="1.5" height="5.4" fill="#9a9a9a"/>
<text x="1185.5" y="278.2" text-anchor="middle" font-family="Liberation Mono" font-size="15" letter-spacing="-0.3" fill="#666">8</text>
<rect x="1184.5" y="279.4" width="1.5" height="5.4" fill="#9a9a9a"/>
<text x="1201.8" y="276.4" text-anchor="middle" font-family="Liberation Mono" font-size="15" letter-spacing="-0.3" fill="#666">76</text>
<rect x="1200.8" y="277.6" width="1.5" height="5.4" fill="#9a9a9a"/>
<text x="1242.3" y="281.2" text-anchor="middle" font-family="Liberation Mono" font-size="15" letter-spacing="-0.3" fill="#666">98</text>
<rect x="1241.3" y="282.4" width="1.5" height="5.4" fill="#9a9a9a"/>
<text x="1277.3999999999999" y="294.5" text-anchor="middle" font-family="Liberation Mono" font-size="15" letter-spacing="-0.3" fill="#666">17</text>
<rect x="1276.4" y="295.7" width="1.5" height="5.4" fill="#9a9a9a"/>
<text x="1327.5" y="281.3" text-anchor="middle" font-family="Liberation Mono" font-size="15" letter-spacing="-0.3" fill="#666">106</text>
<rect x="1326.5" y="282.5" width="1.5" height="5.4" fill="#9a9a9a"/>
<text x="1386.8" y="278.0" text-anchor="middle" font-family="Liberation Mono" font-size="15" letter-spacing="-0.3" fill="#666">90</text>
<rect x="1385.8" y="279.2" width="1.5" height="5.4" fill="#9a9a9a"/>
<text x="1408.8" y="273.2" text-anchor="middle" font-family="Liberation Mono" font-size="15" letter-spacing="-0.3" fill="#666">96</text>
<rect x="1407.8" y="274.4" width="1.5" height="5.4" fill="#9a9a9a"/>
<text x="1487.5" y="268.2" text-anchor="middle" font-family="Liberation Mono" font-size="15" letter-spacing="-0.3" fill="#666">86</text>
<rect x="1486.5" y="269.4" width="1.5" height="5.4" fill="#9a9a9a"/>
<text x="1526.3" y="267.09999999999997" text-anchor="middle" font-family="Liberation Mono" font-size="15" letter-spacing="-0.3" fill="#666">45</text>
<rect x="1525.3" y="268.3" width="1.5" height="5.4" fill="#9a9a9a"/>
<text x="1583.5" y="289.0" text-anchor="middle" font-family="Liberation Mono" font-size="15" letter-spacing="-0.3" fill="#666">44</text>
<rect x="1582.5" y="290.2" width="1.5" height="5.4" fill="#9a9a9a"/>
<text x="1662.6" y="265.3" text-anchor="middle" font-family="Liberation Mono" font-size="15" letter-spacing="-0.3" fill="#666">42</text>
<rect x="1661.6" y="266.5" width="1.5" height="5.4" fill="#9a9a9a"/>
<text x="1324.8999999999999" y="352.7" text-anchor="middle" font-family="Liberation Mono" font-size="15" letter-spacing="-0.3" fill="#666">32</text>
<rect x="1323.9" y="353.9" width="1.5" height="5.4" fill="#9a9a9a"/>
<text x="1385.3" y="392.3" text-anchor="middle" font-family="Liberation Mono" font-size="15" letter-spacing="-0.3" fill="#666">19</text>
<rect x="1384.3" y="393.5" width="1.5" height="5.4" fill="#9a9a9a"/>
<text x="1437.8" y="341.09999999999997" text-anchor="middle" font-family="Liberation Mono" font-size="15" letter-spacing="-0.3" fill="#666">40</text>
<rect x="1436.8" y="342.3" width="1.5" height="5.4" fill="#9a9a9a"/>
<text x="1510.5" y="375.09999999999997" text-anchor="middle" font-family="Liberation Mono" font-size="15" letter-spacing="-0.3" fill="#666">95</text>
<rect x="1509.5" y="376.3" width="1.5" height="5.4" fill="#9a9a9a"/>
<text x="1551.2" y="366.4" text-anchor="middle" font-family="Liberation Mono" font-size="15" letter-spacing="-0.3" fill="#666">61</text>
<rect x="1550.2" y="367.6" width="1.5" height="5.4" fill="#9a9a9a"/>
<text x="1585.7" y="372.09999999999997" text-anchor="middle" font-family="Liberation Mono" font-size="15" letter-spacing="-0.3" fill="#666">23</text>
<rect x="1584.7" y="373.3" width="1.5" height="5.4" fill="#9a9a9a"/>
<text x="1633.3" y="351.59999999999997" text-anchor="middle" font-family="Liberation Mono" font-size="15" letter-spacing="-0.3" fill="#666">104</text>
<rect x="1632.3" y="352.8" width="1.5" height="5.4" fill="#9a9a9a"/>
<text x="1314.3999999999999" y="502.2" text-anchor="middle" font-family="Liberation Mono" font-size="15" letter-spacing="-0.3" fill="#666">89</text>
<rect x="1313.4" y="503.4" width="1.5" height="5.4" fill="#9a9a9a"/>
<text x="1340.2" y="509.3" text-anchor="middle" font-family="Liberation Mono" font-size="15" letter-spacing="-0.3" fill="#666">77</text>
<rect x="1339.2" y="510.5" width="1.5" height="5.4" fill="#9a9a9a"/>
<text x="1356.5" y="508.5" text-anchor="middle" font-family="Liberation Mono" font-size="15" letter-spacing="-0.3" fill="#666">5</text>
<rect x="1355.5" y="509.7" width="1.5" height="5.4" fill="#9a9a9a"/>
<text x="1811" y="240" font-family="Liberation Sans" font-size="19" fill="#595959" textLength="77" lengthAdjust="spacingAndGlyphs">Cluster id</text>
<circle cx="1817" cy="265.7" r="6.3" fill="#c96474"/>
<text x="1834" y="271.2" font-family="Liberation Sans" font-size="16" fill="#595959" textLength="63" lengthAdjust="spacingAndGlyphs">Cluster 1</text>
<circle cx="1817" cy="298" r="6.3" fill="#dbc978"/>
<text x="1834" y="303.5" font-family="Liberation Sans" font-size="16" fill="#595959" textLength="63" lengthAdjust="spacingAndGlyphs">Cluster 2</text>
<circle cx="1817" cy="330.4" r="6.3" fill="#157934"/>
<text x="1834" y="335.9" font-family="Liberation Sans" font-size="16" fill="#595959" textLength="63" lengthAdjust="spacingAndGlyphs">Cluster 3</text>
<circle cx="1817" cy="362.8" r="6.3" fill="#87cbec"/>
<text x="1834" y="368.3" font-family="Liberation Sans" font-size="16" fill="#595959" textLength="63" lengthAdjust="spacingAndGlyphs">Cluster 4</text>
<circle cx="1817" cy="395.2" r="6.3" fill="#332287"/>
<text x="1834" y="400.7" font-family="Liberation Sans" font-size="16" fill="#595959" textLength="63" lengthAdjust="spacingAndGlyphs">Cluster 5</text>
</svg>
<div class="a" style="left:12px;top:672px;width:623px;height:1px;background:#ebebeb"></div>
<div class="a" style="left:12px;top:706px;width:623px;height:1px;background:#d2d2d2"></div>
<div class="a" style="left:12px;top:739px;width:623px;height:2px;background:#8f8f8f"></div>
<div class="a" style="left:12px;top:768px;width:610px;height:1px;background:#ebebeb"></div>
<div class="a" style="left:12px;top:798px;width:610px;height:1px;background:#ebebeb"></div>
<div class="a" style="left:12px;top:826px;width:610px;height:1px;background:#ebebeb"></div>
<div class="a" style="left:12px;top:854px;width:610px;height:1px;background:#ebebeb"></div>
<div class="a" style="left:12px;top:883px;width:610px;height:1px;background:#ebebeb"></div>
<div class="a" style="left:212px;top:673px;width:1px;height:210px;background:#ebebeb"></div>
<div class="a" style="left:412px;top:673px;width:1px;height:210px;background:#ebebeb"></div>
<div class="a" style="left:622px;top:673px;width:1px;height:210px;background:#ebebeb"></div>
<div style="position:absolute;white-space:nowrap;font-size:15.5px;color:#595959;line-height:18px;left:97.5px;top:678.5px;font-size:16px">Clusters</div>
<svg class="a" style="left:182px;top:682px" width="18" height="18"><circle cx="6.6" cy="6.4" r="5.3" fill="none" stroke="#595959" stroke-width="1.6"/><path d="M10.4 10.2 L14.5 14.3" stroke="#595959" stroke-width="2.2" stroke-linecap="round"/></svg>
<svg class="a" style="left:92px;top:698px" width="12" height="8"><polygon points="0,8 6.0,0 12,8" fill="#7a7a7a"/></svg>
<div style="position:absolute;white-space:nowrap;font-size:15.5px;color:#595959;line-height:18px;right:1514px;top:678.5px;font-size:16px">latitude (D1)</div>
<div style="position:absolute;white-space:nowrap;font-size:15.5px;color:#595959;line-height:18px;right:1304.5px;top:678.5px;font-size:16px">longitude (D2)</div>
<div style="position:absolute;white-space:nowrap;font-size:15.5px;color:#595959;line-height:18px;left:18px;top:713.5px;font-weight:bold">Totals</div>
<div style="position:absolute;white-space:nowrap;font-size:15.5px;color:#595959;line-height:18px;right:1514px;top:713.5px;font-weight:bold">-</div>
<div style="position:absolute;white-space:nowrap;font-size:15.5px;color:#595959;line-height:18px;right:1304.5px;top:713.5px;font-weight:bold">-</div>
<div style="position:absolute;white-space:nowrap;font-size:15.5px;color:#595959;line-height:18px;left:18px;top:744.5px">Warehouse 1</div>
<div style="position:absolute;white-space:nowrap;font-size:15.5px;color:#595959;line-height:18px;left:18px;top:773.6px">Warehouse 2</div>
<div style="position:absolute;white-space:nowrap;font-size:15.5px;color:#595959;line-height:18px;left:18px;top:802.3px">Warehouse 3</div>
<div style="position:absolute;white-space:nowrap;font-size:15.5px;color:#595959;line-height:18px;left:18px;top:831.4px">Warehouse 4</div>
<div style="position:absolute;white-space:nowrap;font-size:15.5px;color:#595959;line-height:18px;left:18px;top:859.5px">Warehouse 5</div>
<svg class="a" style="left:212px;top:740px" width="412" height="145">
<g transform="translate(190.5,19.0) scale(0.829,1)"><text x="0" y="0" text-anchor="end" font-family="Liberation Mono" font-size="19" fill="#595959">40.945422240426</text></g>
<g transform="translate(400.1,19.0) scale(0.829,1)"><text x="0" y="0" text-anchor="end" font-family="Liberation Mono" font-size="19" fill="#595959">-73.719966482979</text></g>
<g transform="translate(190.5,48.1) scale(0.829,1)"><text x="0" y="0" text-anchor="end" font-family="Liberation Mono" font-size="19" fill="#595959">42.590538729412</text></g>
<g transform="translate(400.1,48.1) scale(0.829,1)"><text x="0" y="0" text-anchor="end" font-family="Liberation Mono" font-size="19" fill="#595959">-79.067889217647</text></g>
<g transform="translate(190.5,76.8) scale(0.829,1)"><text x="0" y="0" text-anchor="end" font-family="Liberation Mono" font-size="19" fill="#595959">42.805089516667</text></g>
<g transform="translate(400.1,76.8) scale(0.829,1)"><text x="0" y="0" text-anchor="end" font-family="Liberation Mono" font-size="19" fill="#595959">-75.901621883333</text></g>
<g transform="translate(190.5,105.9) scale(0.829,1)"><text x="0" y="0" text-anchor="end" font-family="Liberation Mono" font-size="19" fill="#595959">42.8581692625</text></g>
<g transform="translate(400.1,105.9) scale(0.829,1)"><text x="0" y="0" text-anchor="end" font-family="Liberation Mono" font-size="19" fill="#595959">-77.6800485875</text></g>
<g transform="translate(190.5,134.0) scale(0.829,1)"><text x="0" y="0" text-anchor="end" font-family="Liberation Mono" font-size="19" fill="#595959">43.436770771429</text></g>
<g transform="translate(400.1,134.0) scale(0.829,1)"><text x="0" y="0" text-anchor="end" font-family="Liberation Mono" font-size="19" fill="#595959">-73.734622635714</text></g>
</svg>
<div class="a" style="left:1204px;top:672px;width:703px;height:1px;background:#ebebeb"></div>
<div class="a" style="left:1204px;top:706px;width:703px;height:1px;background:#d2d2d2"></div>
<div class="a" style="left:1204px;top:735px;width:703px;height:1px;background:#ebebeb"></div>
<div class="a" style="left:1204px;top:763px;width:703px;height:1px;background:#ebebeb"></div>
<div class="a" style="left:1204px;top:792px;width:703px;height:1px;background:#ebebeb"></div>
<div class="a" style="left:1204px;top:821px;width:703px;height:1px;background:#ebebeb"></div>
<div class="a" style="left:1204px;top:850px;width:703px;height:1px;background:#ebebeb"></div>
<div class="a" style="left:1204px;top:878px;width:703px;height:1px;background:#ebebeb"></div>
<div class="a" style="left:1204px;top:907px;width:703px;height:1px;background:#ebebeb"></div>
<div class="a" style="left:1204px;top:936px;width:703px;height:1px;background:#ebebeb"></div>
<div class="a" style="left:1374px;top:673px;width:1px;height:283px;background:#ebebeb"></div>
<div class="a" style="left:1594px;top:673px;width:1px;height:283px;background:#ebebeb"></div>
<div class="a" style="left:1804px;top:673px;width:1px;height:283px;background:#ebebeb"></div>
<div style="position:absolute;white-space:nowrap;font-size:15.5px;color:#595959;line-height:18px;left:1305.5px;top:679.5px;font-size:16px">id</div>
<svg class="a" style="left:1344px;top:683px" width="18" height="18"><circle cx="6.6" cy="6.4" r="5.3" fill="none" stroke="#595959" stroke-width="1.6"/><path d="M10.4 10.2 L14.5 14.3" stroke="#595959" stroke-width="2.2" stroke-linecap="round"/></svg>
<svg class="a" style="left:1269px;top:698px" width="12" height="8"><polygon points="0,8 6.0,0 12,8" fill="#7a7a7a"/></svg>
<div style="position:absolute;white-space:nowrap;font-size:15.5px;color:#595959;line-height:18px;left:1380px;top:679.5px;font-size:16px">first_name</div>
<svg class="a" style="left:1564.5px;top:683px" width="18" height="18"><circle cx="6.6" cy="6.4" r="5.3" fill="none" stroke="#595959" stroke-width="1.6"/><path d="M10.4 10.2 L14.5 14.3" stroke="#595959" stroke-width="2.2" stroke-linecap="round"/></svg>
<div style="position:absolute;white-space:nowrap;font-size:15.5px;color:#595959;line-height:18px;left:1599.5px;top:679.5px;font-size:16px">last_name</div>
<svg class="a" style="left:1774.5px;top:683px" width="18" height="18"><circle cx="6.6" cy="6.4" r="5.3" fill="none" stroke="#595959" stroke-width="1.6"/><path d="M10.4 10.2 L14.5 14.3" stroke="#595959" stroke-width="2.2" stroke-linecap="round"/></svg>
<div class="a" style="left:1204px;top:937px;width:703px;height:16px;background:linear-gradient(to bottom, #ffffff, #efefef)"></div>
<div style="position:absolute;white-space:nowrap;font-size:15.5px;color:#595959;line-height:18px;right:551.5px;top:711.0px">1</div>
<div style="position:absolute;white-space:nowrap;font-size:15.5px;color:#595959;line-height:18px;left:1380px;top:711.0px">Kaiya</div>
<div style="position:absolute;white-space:nowrap;font-size:15.5px;color:#595959;line-height:18px;left:1599.5px;top:711.0px">Snow</div>
<div style="position:absolute;white-space:nowrap;font-size:15.5px;color:#595959;line-height:18px;right:551.5px;top:739.2px">2</div>
<div style="position:absolute;white-space:nowrap;font-size:15.5px;color:#595959;line-height:18px;left:1380px;top:739.2px">Dean</div>
<div style="position:absolute;white-space:nowrap;font-size:15.5px;color:#595959;line-height:18px;left:1599.5px;top:739.2px">Roy</div>
<div style="position:absolute;white-space:nowrap;font-size:15.5px;color:#595959;line-height:18px;right:551.5px;top:768.1px">3</div>
<div style="position:absolute;white-space:nowrap;font-size:15.5px;color:#595959;line-height:18px;left:1380px;top:768.1px">Eden</div>
<div style="position:absolute;white-space:nowrap;font-size:15.5px;color:#595959;line-height:18px;left:1599.5px;top:768.1px">Paul</div>
<div style="position:absolute;white-space:nowrap;font-size:15.5px;color:#595959;line-height:18px;right:551.5px;top:797.4px">4</div>
<div style="position:absolute;white-space:nowrap;font-size:15.5px;color:#595959;line-height:18px;left:1380px;top:797.4px">Bryanna</div>
<div style="position:absolute;white-space:nowrap;font-size:15.5px;color:#595959;line-height:18px;left:1599.5px;top:797.4px">Higgins</div>
<div style="position:absolute;white-space:nowrap;font-size:15.5px;color:#595959;line-height:18px;right:551.5px;top:826.4px">5</div>
<div style="position:absolute;white-space:nowrap;font-size:15.5px;color:#595959;line-height:18px;left:1380px;top:826.4px">Elisabeth</div>
<div style="position:absolute;white-space:nowrap;font-size:15.5px;color:#595959;line-height:18px;left:1599.5px;top:826.4px">Lee</div>
<div style="position:absolute;white-space:nowrap;font-size:15.5px;color:#595959;line-height:18px;right:551.5px;top:854.2px">6</div>
<div style="position:absolute;white-space:nowrap;font-size:15.5px;color:#595959;line-height:18px;left:1380px;top:854.2px">Skylar</div>
<div style="position:absolute;white-space:nowrap;font-size:15.5px;color:#595959;line-height:18px;left:1599.5px;top:854.2px">Robinson</div>
<div style="position:absolute;white-space:nowrap;font-size:15.5px;color:#595959;line-height:18px;right:551.5px;top:883.1px">7</div>
<div style="position:absolute;white-space:nowrap;font-size:15.5px;color:#595959;line-height:18px;left:1380px;top:883.1px">Cody</div>
<div style="position:absolute;white-space:nowrap;font-size:15.5px;color:#595959;line-height:18px;left:1599.5px;top:883.1px">Bailey</div>
<div style="position:absolute;white-space:nowrap;font-size:15.5px;color:#595959;line-height:18px;right:551.5px;top:912.4px">8</div>
<div style="position:absolute;white-space:nowrap;font-size:15.5px;color:#595959;line-height:18px;left:1380px;top:912.4px">Dario</div>
<div style="position:absolute;white-space:nowrap;font-size:15.5px;color:#595959;line-height:18px;left:1599.5px;top:912.4px">Sims</div>
<div style="position:absolute;white-space:nowrap;font-size:15.5px;color:#595959;line-height:18px;right:551.5px;top:940.5px">9</div>
<div style="position:absolute;white-space:nowrap;font-size:15.5px;color:#595959;line-height:18px;left:1380px;top:940.5px">Deacon</div>
<div style="position:absolute;white-space:nowrap;font-size:15.5px;color:#595959;line-height:18px;left:1599.5px;top:940.5px">Hood</div>
<div class="a" style="left:1204px;top:953px;width:703px;height:2px;background:#fff"></div>
<svg class="a" style="left:640px;top:660px" width="560" height="296" viewBox="640 660 560 296">
<rect x="707.5" y="671.8" width="481.5" height="1" fill="#d9d9d9"/>
<rect x="707.5" y="742.1" width="481.5" height="1" fill="#d9d9d9"/>
<rect x="707.5" y="811.9" width="481.5" height="1" fill="#d9d9d9"/>
<rect x="707.5" y="880.5" width="11" height="1" fill="#d9d9d9"/>
<rect x="718" y="672" width="1" height="209" fill="#d9d9d9"/>
<rect x="731" y="717.6" width="49" height="163.6" fill="#c96474"/>
<text x="755.5" y="708.6" text-anchor="middle" font-family="Liberation Mono" font-size="13.5" fill="#595959">47</text>
<rect x="801" y="822.0" width="49" height="59.2" fill="#dbc978"/>
<text x="825.5" y="813.0" text-anchor="middle" font-family="Liberation Mono" font-size="13.5" fill="#595959">17</text>
<rect x="871.5" y="797.6" width="49" height="83.6" fill="#157934"/>
<text x="896.0" y="788.6" text-anchor="middle" font-family="Liberation Mono" font-size="13.5" fill="#595959">24</text>
<rect x="942" y="825.5" width="49" height="55.7" fill="#87cbec"/>
<text x="966.5" y="816.5" text-anchor="middle" font-family="Liberation Mono" font-size="13.5" fill="#595959">16</text>
<rect x="1012" y="832.5" width="49" height="48.7" fill="#332287"/>
<text x="1036.5" y="823.5" text-anchor="middle" font-family="Liberation Mono" font-size="13.5" fill="#595959">14</text>
<rect x="719" y="880" width="470" height="2" fill="#9a9a9a"/>
<text x="703.5" y="686.1" text-anchor="end" font-family="Liberation Mono" font-size="14.8" fill="#666">60</text>
<text x="703.5" y="748.5" text-anchor="end" font-family="Liberation Mono" font-size="14.8" fill="#666">40</text>
<text x="703.5" y="818.0" text-anchor="end" font-family="Liberation Mono" font-size="14.8" fill="#666">20</text>
<text x="703.5" y="887.0" text-anchor="end" font-family="Liberation Mono" font-size="14.8" fill="#666">0</text>
<text transform="translate(665,776.5) rotate(-90)" text-anchor="middle" font-family="Liberation Sans" font-size="14" fill="#404040" textLength="113" lengthAdjust="spacingAndGlyphs"># of observations</text>
<text transform="translate(761.5,895.5) rotate(-40)" text-anchor="end" font-family="Liberation Sans" font-size="15" fill="#8a8a8a" textLength="59" lengthAdjust="spacingAndGlyphs">Cluster 1</text>
<text transform="translate(831.5,895.5) rotate(-40)" text-anchor="end" font-family="Liberation Sans" font-size="15" fill="#8a8a8a" textLength="59" lengthAdjust="spacingAndGlyphs">Cluster 2</text>
<text transform="translate(902.0,895.5) rotate(-40)" text-anchor="end" font-family="Liberation Sans" font-size="15" fill="#8a8a8a" textLength="59" lengthAdjust="spacingAndGlyphs">Cluster 3</text>
<text transform="translate(972.5,895.5) rotate(-40)" text-anchor="end" font-family="Liberation Sans" font-size="15" fill="#8a8a8a" textLength="59" lengthAdjust="spacingAndGlyphs">Cluster 4</text>
<text transform="translate(1042.5,895.5) rotate(-40)" text-anchor="end" font-family="Liberation Sans" font-size="15" fill="#8a8a8a" textLength="59" lengthAdjust="spacingAndGlyphs">Cluster 5</text>
</svg>
</body></html>
